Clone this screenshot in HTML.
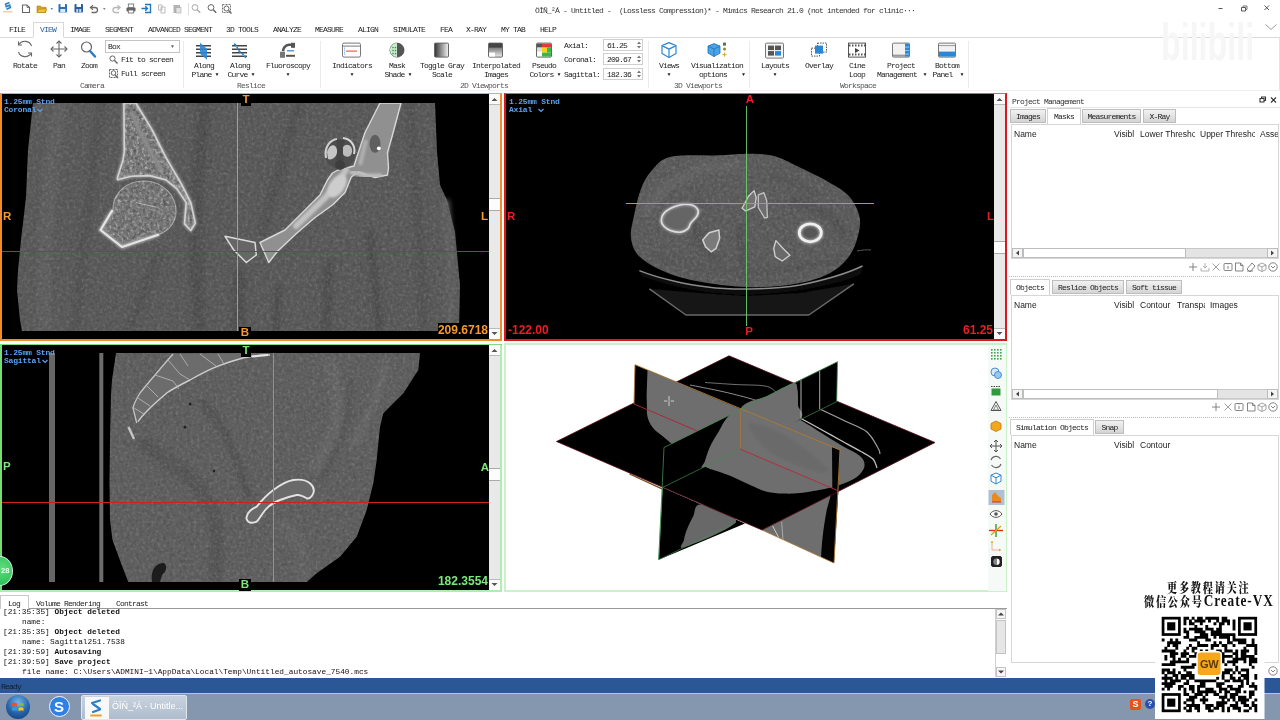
<!DOCTYPE html><html><head><meta charset="utf-8"><title>Mimics Research 21.0</title><style>
*{box-sizing:border-box;margin:0;padding:0}
html,body{width:1280px;height:720px;overflow:hidden;background:#fff}
body{font-family:"Liberation Mono","Noto Sans CJK SC",monospace;font-size:8px;color:#222;letter-spacing:-0.8px;line-height:10px}
#root{will-change:transform;position:relative;width:1280px;height:720px;overflow:hidden;background:#fff}
.a{position:absolute;white-space:nowrap}
.c{position:absolute;white-space:nowrap;text-align:center}
.sans{font-family:"Liberation Sans","Noto Sans CJK SC",sans-serif;letter-spacing:0}
.log{font-family:"Liberation Mono",monospace;font-size:7.8px;letter-spacing:0;color:#111}
.sep{position:absolute;width:1px;background:#ebebeb}
.tabg{position:absolute;background:linear-gradient(#f2f2f2,#d4d4d4);border:1px solid #bdbdbd;text-align:center}
.tabw{position:absolute;background:#fff;border:1px solid #d0d0d0;border-bottom:none;text-align:center}
svg{position:absolute;overflow:visible}
</style></head><body><div id="root">
<div class="a" style="left:535px;top:5.5px;color:#333">ÖÎÑ_²Á - Untitled -&nbsp; (Lossless Compression)* - Mimics Research 21.0 (not intended for clinic···</div>
<svg style="left:1210px;top:1px" width="66" height="16" viewBox="0 0 66 16"><g stroke="#555" stroke-width="1" fill="none"><path d="M8.500 7.500h4"/><path d="M31.500 6.500h4v3.500h-4z"/><path d="M33 6.500v-1.500h4v3.500h-1.500" stroke="#777"/><path d="M54.500 4.500l4.500 4.500m0-4.500l-4.500 4.500"/></g></svg>
<svg style="left:1264px;top:22px" width="14" height="10" viewBox="0 0 14 10"><path d="M1.5 2.5l5.5 5 5.5-5" stroke="#999" fill="none"/></svg>
<svg style="left:0;top:-0.800px" width="240" height="20" viewBox="0 0 240 20"><g fill="none"><path d="M5 5.500l4.500-2M5.500 8l5-2.200M6.500 10.300l4.500-2" stroke="#2b7fc8" stroke-width="1.700"/><path d="M5 5.500l2 2.500M9 6.500l2 2" stroke="#2b7fc8" stroke-width="1.200"/><path d="M3 12.800h9.500" stroke="#f3c48a" stroke-width="1.200"/></g><path d="M22.500 6h4.500l2.500 2.500v5h-7z" fill="#fff" stroke="#666" stroke-width="1.100"/><path d="M27 6v2.500h2.500" fill="none" stroke="#666" stroke-width=".8"/><path d="M37 7h3.500l1 1.300h4.500v5.200h-9z" fill="#d9a521" stroke="#a87a10" stroke-width=".6"/><path d="M37 13.500l1.800-3.500h8l-1.800 3.500z" fill="#f0c040" stroke="#a87a10" stroke-width=".5"/><path d="M50.500 9.200l1.300 1.600 1.300-1.600z" fill="#1c5fa8"/><rect x="58.500" y="5" width="8.500" height="8.500" rx=".8" fill="#2a72b8"/><rect x="60.500" y="5" width="4.500" height="3" fill="#fff"/><rect x="60.300" y="10" width="5" height="3.500" fill="#dce8f4"/><rect x="74.500" y="5" width="8.500" height="8.500" rx=".8" fill="#2a5e9a"/><rect x="76.500" y="5" width="4.500" height="3" fill="#fff"/><rect x="76.300" y="10" width="5" height="3.500" fill="#c8d8ea"/><path d="M78.700 10v3.500" stroke="#2a5e9a" stroke-width="1"/><path d="M91 8.500h4a2.500 2.500 0 0 1 0 5h-3.500" fill="none" stroke="#6a6a6a" stroke-width="1.300"/><path d="M93 6.200l-2.600 2.300 2.600 2.300" fill="none" stroke="#6a6a6a" stroke-width="1.200"/><path d="M103 9.200l1.300 1.600 1.300-1.600z" fill="#555"/><path d="M119.500 8.500h-4a2.500 2.500 0 0 0 0 5h3.500" fill="none" stroke="#b8b8b8" stroke-width="1.300"/><path d="M117.500 6.200l2.600 2.300-2.600 2.300" fill="none" stroke="#b8b8b8" stroke-width="1.200"/><rect x="126.500" y="8.500" width="9" height="4" rx=".8" fill="#666"/><rect x="128.300" y="5" width="5.400" height="3.500" fill="#fff" stroke="#666" stroke-width=".8"/><rect x="128.300" y="11" width="5.400" height="3" fill="#fff" stroke="#666" stroke-width=".8"/><path d="M145 5.500h5.500v8h-5.500" fill="none" stroke="#1c78c0" stroke-width="1.400"/><path d="M141.500 9.500h6m-2.200-2.200l2.200 2.200-2.200 2.200" fill="none" stroke="#1c78c0" stroke-width="1.300"/><path d="M158.500 6h3.500v5h-3.500z M161 8h4v6h-4z" fill="#fff" stroke="#b4b4b4" stroke-width=".9"/><rect x="173.500" y="6" width="6.500" height="8" fill="#b4b4b4"/><rect x="176" y="8.500" width="5" height="5.500" fill="#e4e4e4" stroke="#a4a4a4" stroke-width=".6"/><path d="M188.500 4v12" stroke="#ddd"/><circle cx="195" cy="8.500" r="2.900" fill="none" stroke="#aaa" stroke-width="1"/><path d="M197.2 10.700l3 3" stroke="#aaa" stroke-width="1.500"/><circle cx="211" cy="8.500" r="2.900" fill="none" stroke="#666" stroke-width="1"/><path d="M213.2 10.700l3 3" stroke="#666" stroke-width="1.500"/><rect x="222.500" y="5.500" width="8" height="8" fill="none" stroke="#777" stroke-dasharray="2 1"/><circle cx="226.500" cy="9.500" r="2.500" fill="#fff" stroke="#666"/><path d="M228.500 11.500l3 3" stroke="#666" stroke-width="1.500"/></svg>
<div class="a" style="left:0px;top:37px;width:1280px;height:1px;background:#dcdcdc;"></div>
<div class="a" style="left:33px;top:22px;width:31px;height:16px;background:#fff;border:1px solid #d8d8d8;border-bottom:1px solid #fff"></div>
<div class="a" style="left:9px;top:24.5px;color:#222">FILE</div>
<div class="a" style="left:40px;top:24.5px;color:#2a5d9c">VIEW</div>
<div class="a" style="left:70px;top:24.5px;color:#222">IMAGE</div>
<div class="a" style="left:105px;top:24.5px;color:#222">SEGMENT</div>
<div class="a" style="left:148px;top:24.5px;color:#222">ADVANCED SEGMENT</div>
<div class="a" style="left:226px;top:24.5px;color:#222">3D TOOLS</div>
<div class="a" style="left:273px;top:24.5px;color:#222">ANALYZE</div>
<div class="a" style="left:315px;top:24.5px;color:#222">MEASURE</div>
<div class="a" style="left:358px;top:24.5px;color:#222">ALIGN</div>
<div class="a" style="left:393px;top:24.5px;color:#222">SIMULATE</div>
<div class="a" style="left:440px;top:24.5px;color:#222">FEA</div>
<div class="a" style="left:466px;top:24.5px;color:#222">X-RAY</div>
<div class="a" style="left:501px;top:24.5px;color:#222">MY TAB</div>
<div class="a" style="left:540px;top:24.5px;color:#222">HELP</div>
<div class="a" style="left:0px;top:90px;width:1280px;height:1px;background:#f0f0f0;"></div>
<div class="sep" style="left:183px;top:41px;height:47px"></div>
<div class="sep" style="left:320px;top:41px;height:47px"></div>
<div class="sep" style="left:648px;top:41px;height:47px"></div>
<div class="sep" style="left:749px;top:41px;height:47px"></div>
<div class="sep" style="left:968px;top:41px;height:47px"></div>
<div class="c" style="left:52.0px;top:80.5px;width:80px;color:#555">Camera</div>
<div class="c" style="left:211.0px;top:80.5px;width:80px;color:#555">Reslice</div>
<div class="c" style="left:444.0px;top:80.5px;width:80px;color:#555">2D Viewports</div>
<div class="c" style="left:658.0px;top:80.5px;width:80px;color:#555">3D Viewports</div>
<div class="c" style="left:818.0px;top:80.5px;width:80px;color:#555">Workspace</div>
<div class="c" style="left:-15.0px;top:60.5px;width:80px;">Rotate</div>
<div class="c" style="left:19.0px;top:60.5px;width:80px;">Pan</div>
<div class="c" style="left:49.0px;top:60.5px;width:80px;">Zoom</div>
<div class="c" style="left:164.0px;top:60.5px;width:80px;">Along</div>
<div class="c" style="left:165.0px;top:69.5px;width:80px;">Plane <span style="font-size:5px;letter-spacing:0;vertical-align:1px">&#9660;</span></div>
<div class="c" style="left:200.0px;top:60.5px;width:80px;">Along</div>
<div class="c" style="left:201.0px;top:69.5px;width:80px;">Curve <span style="font-size:5px;letter-spacing:0;vertical-align:1px">&#9660;</span></div>
<div class="c" style="left:248.0px;top:60.5px;width:80px;">Fluoroscopy</div>
<div class="c" style="left:248.0px;top:69.5px;width:80px;"><span style="font-size:5px;letter-spacing:0;vertical-align:1px">&#9660;</span></div>
<div class="c" style="left:312.0px;top:60.5px;width:80px;">Indicators</div>
<div class="c" style="left:312.0px;top:69.5px;width:80px;"><span style="font-size:5px;letter-spacing:0;vertical-align:1px">&#9660;</span></div>
<div class="c" style="left:357.0px;top:60.5px;width:80px;">Mask</div>
<div class="c" style="left:358.0px;top:69.5px;width:80px;">Shade <span style="font-size:5px;letter-spacing:0;vertical-align:1px">&#9660;</span></div>
<div class="c" style="left:402.0px;top:60.5px;width:80px;">Toggle Gray</div>
<div class="c" style="left:402.0px;top:69.5px;width:80px;">Scale</div>
<div class="c" style="left:456.0px;top:60.5px;width:80px;">Interpolated</div>
<div class="c" style="left:456.0px;top:69.5px;width:80px;">Images</div>
<div class="c" style="left:504.0px;top:60.5px;width:80px;">Pseudo</div>
<div class="c" style="left:505.0px;top:69.5px;width:80px;">Colors <span style="font-size:5px;letter-spacing:0;vertical-align:1px">&#9660;</span></div>
<div class="c" style="left:629.0px;top:60.5px;width:80px;">Views</div>
<div class="c" style="left:629.0px;top:69.5px;width:80px;"><span style="font-size:5px;letter-spacing:0;vertical-align:1px">&#9660;</span></div>
<div class="c" style="left:677.0px;top:60.5px;width:80px;">Visualization</div>
<div class="c" style="left:673.0px;top:69.5px;width:80px;">options</div>
<div class="a" style="left:742px;top:69.5px;"><span style="font-size:5px;letter-spacing:0;vertical-align:1px">&#9660;</span></div>
<div class="c" style="left:735.0px;top:60.5px;width:80px;">Layouts</div>
<div class="c" style="left:735.0px;top:69.5px;width:80px;"><span style="font-size:5px;letter-spacing:0;vertical-align:1px">&#9660;</span></div>
<div class="c" style="left:779.0px;top:60.5px;width:80px;">Overlay</div>
<div class="c" style="left:817.0px;top:60.5px;width:80px;">Cine</div>
<div class="c" style="left:817.0px;top:69.5px;width:80px;">Loop</div>
<div class="c" style="left:861.0px;top:60.5px;width:80px;">Project</div>
<div class="c" style="left:857.0px;top:69.5px;width:80px;">Management</div>
<div class="a" style="left:923.5px;top:69.5px;"><span style="font-size:5px;letter-spacing:0;vertical-align:1px">&#9660;</span></div>
<div class="c" style="left:907.0px;top:60.5px;width:80px;">Bottom</div>
<div class="c" style="left:908.0px;top:69.5px;width:80px;">Panel&nbsp; <span style="font-size:5px;letter-spacing:0;vertical-align:1px">&#9660;</span></div>
<div class="a" style="left:105px;top:40px;width:75px;height:13px;border:1px solid #c4c4c4;background:#fff"></div>
<div class="a" style="left:108px;top:41.5px;">Box</div>
<div class="a" style="left:171px;top:41.5px;color:#666"><span style="font-size:5px;letter-spacing:0;vertical-align:1px">&#9660;</span></div>
<div class="a" style="left:121px;top:54.5px;">Fit to screen</div>
<div class="a" style="left:121px;top:68.5px;">Full screen</div>
<svg style="left:108px;top:54px" width="12" height="26" viewBox="0 0 12 26"><circle cx="4.500" cy="4.500" r="2.600" fill="none" stroke="#666"/><path d="M6.500 6.500l3 3" stroke="#666" stroke-width="1.400"/><rect x="1.500" y="15.500" width="8" height="8" fill="none" stroke="#666" stroke-dasharray="2 1"/><circle cx="5.500" cy="19" r="2.300" fill="#fff" stroke="#666"/><path d="M7 21l3 3" stroke="#666" stroke-width="1.400"/></svg>
<div class="a" style="left:564px;top:40.5px;">Axial:</div>
<div class="a" style="left:603px;top:39px;width:40px;height:12px;border:1px solid #cfcfcf;background:#fff"></div>
<div class="a" style="left:607px;top:40.5px;">61.25</div>
<svg style="left:636px;top:40px" width="6" height="10" viewBox="0 0 6 10"><path d="M1 4l2-2.500 2 2.500z M1 6l2 2.500 2-2.500z" fill="#777"/></svg>
<div class="a" style="left:564px;top:54.5px;">Coronal:</div>
<div class="a" style="left:603px;top:53px;width:40px;height:12px;border:1px solid #cfcfcf;background:#fff"></div>
<div class="a" style="left:607px;top:54.5px;">209.67</div>
<svg style="left:636px;top:54px" width="6" height="10" viewBox="0 0 6 10"><path d="M1 4l2-2.500 2 2.500z M1 6l2 2.500 2-2.500z" fill="#777"/></svg>
<div class="a" style="left:564px;top:69.5px;">Sagittal:</div>
<div class="a" style="left:603px;top:68px;width:40px;height:12px;border:1px solid #cfcfcf;background:#fff"></div>
<div class="a" style="left:607px;top:69.5px;">182.36</div>
<svg style="left:636px;top:69px" width="6" height="10" viewBox="0 0 6 10"><path d="M1 4l2-2.500 2 2.500z M1 6l2 2.500 2-2.500z" fill="#777"/></svg>
<svg style="left:0;top:38px" width="980" height="26" viewBox="0 38 980 26"><g fill="none" stroke="#666" stroke-width="1.1" transform="translate(50,0) scale(-1,1)"><path d="M18.500 46a7 7 0 0 1 12.500-1.500"/><path d="M31.500 52a7 7 0 0 1-12.500 1.500"/><path d="M31.500 41.500v3.500h-3.500"/><path d="M18.500 56.500v-3.500h3.500"/></g><g fill="none" stroke="#666" stroke-width="1.1"><path d="M59 41v16M51 49h16"/><path d="M56.500 43.500l2.500-2.500 2.500 2.500M56.500 54.500l2.500 2.500 2.500-2.500M53.500 46.500l-2.500 2.500 2.500 2.500M64.500 46.500l2.500 2.500-2.500 2.500"/></g><circle cx="86.500" cy="47" r="5" fill="#fff" stroke="#666" stroke-width="1.2"/><path d="M90 51l5 5.500" stroke="#2a7ac8" stroke-width="2.400" stroke-linecap="round"/><g transform="translate(0,1.8)"><g stroke="#444" stroke-width="1.400"><path d="M196 44h15M196 47.500h15M196 51h15M196 54.500h15"/></g><path d="M200 41l7 6v11l-7-6z" fill="#2a86d6" opacity=".9"/><g stroke="#444" stroke-width="1.400"><path d="M232 44h15M232 47.500h15M232 51h15M232 54.500h15"/></g><path d="M234 42c4 2 3 6 6 8s4 4 6 6" fill="none" stroke="#2a86d6" stroke-width="1.600" stroke-dasharray="3 1"/><path d="M294 43h-5a6.500 6.500 0 0 0-6 6.500" fill="none" stroke="#555" stroke-width="2.600"/><rect x="280" y="50" width="5" height="6" fill="#777"/><rect x="291" y="41" width="4" height="5" fill="#555"/><path d="M286 54h9" stroke="#555" stroke-width="2"/><path d="M287 49h7" stroke="#2a86d6" stroke-width="1.200"/></g><g transform="translate(0,0.6)"><rect x="342.500" y="42.500" width="18" height="14" rx="1.500" fill="#fff" stroke="#777"/><path d="M343 45.500h17" stroke="#777"/><path d="M346 50.500h11" stroke="#e0402a"/><path d="M344.500 47v8" stroke="#58a6e0" stroke-dasharray="1 1"/><circle cx="397" cy="49.500" r="7" fill="#555" stroke="#444" stroke-width=".8"/><path d="M397 42.500a7 7 0 0 0 0 14z" fill="#c9ecd0"/><g fill="#2e9a48"><circle cx="393" cy="47" r=".8"/><circle cx="395.500" cy="47" r=".8"/><circle cx="393" cy="50" r=".8"/><circle cx="395.500" cy="50" r=".8"/><circle cx="393" cy="53" r=".8"/><circle cx="395.500" cy="53" r=".8"/></g><defs><linearGradient id="gg" x1="0" x2="1"><stop offset="0" stop-color="#333"/><stop offset="1" stop-color="#f4f4f4"/></linearGradient><linearGradient id="gv" x1="0" x2="0" y1="0" y2="1"><stop offset="0" stop-color="#444"/><stop offset="1" stop-color="#eee"/></linearGradient></defs><rect x="434.500" y="42.500" width="14" height="14" rx="1" fill="url(#gg)" stroke="#666"/><rect x="488.500" y="42.500" width="14" height="14" rx="1" fill="url(#gv)" stroke="#666"/><rect x="489" y="43" width="13" height="4" fill="#444"/><rect x="489" y="52" width="6" height="4" fill="#fff"/><rect x="536.500" y="42.500" width="15" height="14" rx="1" fill="#fff" stroke="#666"/><rect x="537" y="43" width="5" height="4" fill="#555"/><rect x="542" y="43" width="5" height="4" fill="#e03a3a"/><rect x="547" y="43" width="4" height="4" fill="#e03a3a"/><rect x="542" y="47" width="5" height="5" fill="#f2d21c"/><rect x="547" y="47" width="4" height="5" fill="#3cb648"/><rect x="542" y="52" width="9" height="4" fill="#3cb648"/><rect x="537" y="47" width="5" height="4" fill="#ddd"/><g fill="#fff" stroke="#2a86d6" stroke-width="1.200" stroke-linejoin="round"><path d="M669 42l7 3v8l-7 4-7-4v-8z"/><path d="M662 45l7 3.500 7-3.500M669 48.500v8.500"/></g><g stroke="#1d6fb8" stroke-width=".8" stroke-linejoin="round"><path d="M714 43l6 2.500v7l-6 3.500-6-3.500v-7z" fill="#4aa3e6"/><path d="M708 45.500l6 3 6-3" fill="none"/><path d="M714 48.500v7.500" fill="none"/></g><rect x="723" y="42" width="3" height="3" fill="#666"/><circle cx="724.500" cy="48.500" r="1.500" fill="#8a8a2a"/><path d="M724.500 52v4M722.500 54h4" stroke="#d9a91a"/><rect x="765.500" y="42.500" width="18" height="15" rx="1" fill="#f4f4f4" stroke="#777"/><rect x="768" y="45" width="6" height="4.500" fill="#555"/><rect x="775" y="45" width="6" height="4.500" fill="#555"/><rect x="768" y="50.500" width="6" height="4.500" fill="#555"/><rect x="775" y="50.500" width="6" height="4.500" fill="#2a86d6"/><rect x="811.500" y="47.500" width="8" height="8" fill="none" stroke="#555" stroke-dasharray="1.500 1"/><rect x="817.500" y="42.500" width="9" height="9" fill="none" stroke="#555" stroke-dasharray="1.500 1"/><rect x="815" y="45" width="8" height="8" fill="#2a86d6"/><rect x="848.500" y="42.500" width="17" height="14" fill="#fff" stroke="#555"/><path d="M849 45h16M849 54h16" stroke="#555" stroke-dasharray="1.500 1.500" stroke-width="2"/><path d="M855 47.500l4.500 2.500-4.500 2.500z" fill="#444"/><rect x="892.500" y="42.500" width="17" height="14" rx="1" fill="#f2f2f2" stroke="#777"/><rect x="905" y="43" width="4" height="13" fill="#2a86d6"/><path d="M905 46.500h4M905 50h4M905 53.500h4" stroke="#cfe6f8" stroke-width=".7"/><rect x="893" y="54" width="12" height="2" fill="#999"/><rect x="938.500" y="42.500" width="17" height="14" rx="1" fill="#f2f2f2" stroke="#777"/><rect x="939" y="51" width="16" height="5" fill="#2a86d6"/><path d="M939 45h16" stroke="#999"/></g></svg>
<div class="a sans" style="left:1161px;top:14px;font-size:52px;line-height:56px;font-weight:bold;color:#f6f6f6;letter-spacing:0;transform:scaleX(.62);transform-origin:0 0">bilibili</div>
<div class="a" style="left:1279px;top:38px;width:1px;height:52px;background:#e4e4e4;"></div>
<div class="a" style="left:0;top:93px;width:502px;height:248px;border:2px solid #f28c28;border-top:1px solid #f3a560;background:#000"></div>
<div class="a" style="left:504px;top:93px;width:503px;height:248px;border:2px solid #e0161c;border-top:1px solid #e8605c;background:#000"></div>
<div class="a" style="left:0;top:344px;width:502px;height:248px;border:2px solid #74de74;border-top:1px solid #7edc7e;background:#000"></div>
<div class="a" style="left:0;top:590px;width:502px;height:2px;background:#aeeeae"></div><div class="a" style="left:500px;top:345px;width:2px;height:247px;background:#aeeeae"></div>
<div class="a" style="left:504px;top:343px;width:503px;height:249px;border:2px solid #c9f2c9;background:#fff"></div>
<div class="a" style="left:489px;top:94px;width:11px;height:245px;background:#e9e9e9"></div>
<div class="a" style="left:489px;top:94px;width:11px;height:11px;background:#fafafa;border-bottom:1px solid #bbb"></div>
<div class="a" style="left:489px;top:328px;width:11px;height:11px;background:#fafafa;border-top:1px solid #bbb"></div>
<div class="a" style="left:489px;top:198px;width:11px;height:13px;background:#fcfcfc;border-top:1px solid #aaa;border-bottom:1px solid #aaa"></div>
<svg style="left:489px;top:94px" width="11" height="245" viewBox="0 0 11 245"><path d="M2.500 7l3-3 3 3z M2.500 238l3 3 3-3z" fill="#555"/></svg>
<div class="a" style="left:994px;top:94px;width:11px;height:245px;background:#e9e9e9"></div>
<div class="a" style="left:994px;top:94px;width:11px;height:11px;background:#fafafa;border-bottom:1px solid #bbb"></div>
<div class="a" style="left:994px;top:328px;width:11px;height:11px;background:#fafafa;border-top:1px solid #bbb"></div>
<div class="a" style="left:994px;top:241px;width:11px;height:13px;background:#fcfcfc;border-top:1px solid #aaa;border-bottom:1px solid #aaa"></div>
<svg style="left:994px;top:94px" width="11" height="245" viewBox="0 0 11 245"><path d="M2.500 7l3-3 3 3z M2.500 238l3 3 3-3z" fill="#555"/></svg>
<div class="a" style="left:489px;top:345px;width:11px;height:245px;background:#e9e9e9"></div>
<div class="a" style="left:489px;top:345px;width:11px;height:11px;background:#fafafa;border-bottom:1px solid #bbb"></div>
<div class="a" style="left:489px;top:579px;width:11px;height:11px;background:#fafafa;border-top:1px solid #bbb"></div>
<div class="a" style="left:489px;top:468px;width:11px;height:13px;background:#fcfcfc;border-top:1px solid #aaa;border-bottom:1px solid #aaa"></div>
<svg style="left:489px;top:345px" width="11" height="245" viewBox="0 0 11 245"><path d="M2.500 7l3-3 3 3z M2.500 238l3 3 3-3z" fill="#555"/></svg>
<svg style="left:0;top:0" width="1280" height="720" viewBox="0 0 1280 720"><defs>
<filter id="b1" x="-5%" y="-5%" width="110%" height="110%"><feGaussianBlur stdDeviation="0.7"/></filter>
<filter id="b2" x="-20%" y="-20%" width="140%" height="140%"><feGaussianBlur stdDeviation="2.5"/></filter>
<filter id="b3" x="-20%" y="-20%" width="140%" height="140%"><feGaussianBlur stdDeviation="1.2"/></filter>
<filter id="nz" x="0" y="0" width="100%" height="100%"><feTurbulence type="fractalNoise" baseFrequency="0.33" numOctaves="3" seed="3" result="t"/><feColorMatrix type="matrix" values="0 0 0 0 1  0 0 0 0 1  0 0 0 0 1  2.2 0 0 0 -1.0"/></filter>
<filter id="nzd" x="0" y="0" width="100%" height="100%"><feTurbulence type="fractalNoise" baseFrequency="0.3" numOctaves="3" seed="11" result="t"/><feColorMatrix type="matrix" values="0 0 0 0 0  0 0 0 0 0  0 0 0 0 0  0 2.2 0 0 -1.0"/></filter>
<clipPath id="cCor"><rect x="2" y="103" width="487" height="228"/></clipPath>
<clipPath id="cAx"><rect x="506" y="94" width="488" height="245"/></clipPath>
<clipPath id="cSag"><rect x="2" y="353" width="487" height="229"/></clipPath>
</defs><g clip-path="url(#cCor)"><g filter="url(#b1)"><polygon points="33,103 28,150 26,197 21,240 18,270 17,290 20,320 22,331 459,331 460,285 455,232 447,200 440,185 437,152 435,103" fill="#5a5a5a"/><g filter="url(#b2)" fill="none"><path d="M60 103C50 180 40 260 45 331" stroke="#616161" stroke-width="14"/><path d="M100 103C95 160 85 210 75 331" stroke="#535353" stroke-width="8"/><path d="M205 103C200 160 190 210 200 331" stroke="#515151" stroke-width="14"/><path d="M160 250C150 280 140 300 130 331" stroke="#525252" stroke-width="8"/><path d="M300 103C290 140 270 200 262 235" stroke="#525252" stroke-width="10"/><path d="M330 260C325 290 330 310 325 331" stroke="#505050" stroke-width="9"/><path d="M370 230C372 270 378 300 380 331" stroke="#505050" stroke-width="9"/><path d="M410 103C415 170 420 240 425 331" stroke="#535353" stroke-width="8"/><path d="M445 200C450 250 452 290 450 331" stroke="#626262" stroke-width="8"/><path d="M240 270C238 290 240 310 238 331" stroke="#4f4f4f" stroke-width="12"/><path d="M278 285C276 300 278 315 276 331" stroke="#4e4e4e" stroke-width="6"/></g><clipPath id="bCor"><polygon points="33,103 28,150 26,197 21,240 18,270 17,290 20,320 22,331 459,331 460,285 455,232 447,200 440,185 437,152 435,103"/></clipPath><g clip-path="url(#bCor)"><rect x="10" y="103" width="460" height="228" filter="url(#nz)" opacity=".14"/><rect x="10" y="103" width="460" height="228" filter="url(#nzd)" opacity=".14"/></g><polygon points="123.9,103 135.8,103 151.8,129.3 165.6,156.8 181.6,184.3 190.8,202.6 195.3,223.2 190.8,230.5 184.5,224 186.2,202.6 177,188.9 165.6,179.7 149.5,175.6 131.2,176.3 117.5,179.7 117.5,177.5 123,160 124.3,152.2" fill="#787878" stroke="#9a9a9a" stroke-width="3.4" stroke-linejoin="round" filter="url(#b3)"/><clipPath id="bIl"><polygon points="123.9,103 135.8,103 151.8,129.3 165.6,156.8 181.6,184.3 190.8,202.6 195.3,223.2 190.8,230.5 184.5,224 186.2,202.6 177,188.9 165.6,179.7 149.5,175.6 131.2,176.3 117.5,179.7 117.5,177.5 123,160 124.3,152.2"/></clipPath><g clip-path="url(#bIl)"><rect x="110" y="100" width="90" height="135" filter="url(#nz)" opacity=".5"/><rect x="110" y="100" width="90" height="135" filter="url(#nzd)" opacity=".35"/></g><polygon points="123.9,103 135.8,103 151.8,129.3 165.6,156.8 181.6,184.3 190.8,202.6 195.3,223.2 190.8,230.5 184.5,224 186.2,202.6 177,188.9 165.6,179.7 149.5,175.6 131.2,176.3 117.5,179.7 117.5,177.5 123,160 124.3,152.2" fill="none" stroke="#d2d2d2" stroke-width="1.6" stroke-linejoin="round"/><path d="M131 112l10 22 12 22 10 16" fill="none" stroke="#8c8c8c" stroke-width="4" filter="url(#b3)"/><path d="M112.900 209.500C113 192 128 180.500 145 181C163 181.500 176.500 196 176 212C175.500 222 170 230 158.700 234.700L122 247.300L100.300 230.100Z" fill="#747474" stroke="#a8a8a8" stroke-width="1.1" stroke-linejoin="round"/><clipPath id="bFh"><path d="M112.900 209.500C113 192 128 180.500 145 181C163 181.500 176.500 196 176 212C175.500 222 170 230 158.700 234.700L122 247.300L100.300 230.100Z"/></clipPath><g clip-path="url(#bFh)"><rect x="98" y="178" width="82" height="72" filter="url(#nz)" opacity=".45"/><rect x="98" y="178" width="82" height="72" filter="url(#nzd)" opacity=".3"/></g><path d="M112.500 210L100.500 230L122 247L159 234.500" fill="none" stroke="#a8a8a8" stroke-width="4" stroke-linejoin="round" filter="url(#b3)"/><path d="M112.500 210L100.500 230L122 247L159 234.500" fill="none" stroke="#e4e4e4" stroke-width="2.2" stroke-linejoin="round"/><path d="M135.800 202.600l20.600 4.600" stroke="#b4b4b4" stroke-width="1"/><polygon points="225,236.3 255,242.5 256.3,255 246.3,262.5 233.8,250" fill="#666" stroke="#dadada" stroke-width="1.5" stroke-linejoin="round"/><polygon points="260,242.5 268.8,262.5 277.5,251.3 297.5,232.5 315,217.5 332.5,205 345,192.5 351.3,177 358,172 375,177.5 387.5,175 388.5,168 387.5,152.5 392.5,135 401,103 380,103 365,132.5 357.5,155 354,166 346,168 338,170 332.5,173 327.5,180 320,195 307.5,207.5 285,230" fill="#909090" stroke="#d8d8d8" stroke-width="1.4" stroke-linejoin="round"/><path d="M296 226L325 198L338 182L346 170" fill="none" stroke="#c2c2c2" stroke-width="6" filter="url(#b3)" stroke-linecap="round"/><ellipse cx="337" cy="186" rx="13" ry="7.500" transform="rotate(-55 337 186)" fill="#cdcdcd" filter="url(#b3)"/><path d="M352 172L366 176L380 176" fill="none" stroke="#bcbcbc" stroke-width="5" filter="url(#b3)" stroke-linecap="round"/><path d="M366 140L360 165" fill="none" stroke="#b0b0b0" stroke-width="4" filter="url(#b3)"/><ellipse cx="375" cy="143.800" rx="5.500" ry="9" fill="#5e5e5e"/><circle cx="378.800" cy="148.300" r="1.900" fill="#fff"/><circle cx="340" cy="154" r="15" fill="#4e4e4e"/><path d="M326 158C324 147 330 140 337 139" fill="none" stroke="#cfcfcf" stroke-width="2.2"/><path d="M343 138C351 139 356 146 354 154" fill="none" stroke="#d8d8d8" stroke-width="2"/><path d="M327 152c3-9 9-8 10-2s-5 11-9 9z" fill="#c6c6c6"/><path d="M343 147c4-5 10-1 9 5s-7 6-9 2z" fill="#bdbdbd"/><path d="M336 140c2 6 2 14 0 20h8c-2-6-2-14 1-20z" fill="#444"/><circle cx="340" cy="165" r="5" fill="#3e3e3e"/></g></g><g clip-path="url(#cAx)"><g filter="url(#b1)"><polygon points="649.4,288.8 686,315 808.8,315 853.8,283.8 800,293 746,296 700,293" fill="#131313"/><path d="M649.400 288.800L686 315H808.800L853.800 283.800" fill="none" stroke="#6a6a6a" stroke-width="1.5" stroke-linejoin="round"/><path d="M639.400 270.600C660 279 690 285 707.500 287C730 290 770 290 800 285C825 280 850 272 862.500 266L861 274C840 284 800 293 746 295C700 294 660 284 641 275Z" fill="#0c0c0c"/><path d="M639.400 270.600C660 279 690 285 707.500 287C730 290 770 290 800 285C825 280 850 272 862.500 266" fill="none" stroke="#8c8c8c" stroke-width="1.5"/><path d="M857 251C862 250 867 249.500 871 250" fill="none" stroke="#555" stroke-width="1"/><path d="M651.7 170.6C656.8 165.0 659.5 159.2 671.0 156.7C682.5 154.1 707.8 155.8 721.0 155.3C734.2 154.8 741.0 153.6 750.0 153.8C759.0 154.0 766.7 154.0 775.0 156.3C783.3 158.6 791.7 163.6 800.0 167.5C808.3 171.4 817.5 175.8 825.0 180.0C832.5 184.2 840.0 188.3 845.0 192.5C850.0 196.7 852.5 200.4 855.0 205.0C857.5 209.6 859.6 214.6 860.0 220.0C860.4 225.4 859.2 231.7 857.5 237.5C855.8 243.3 853.8 249.6 850.0 255.0C846.2 260.4 841.2 265.8 835.0 270.0C828.8 274.2 821.7 277.3 812.5 280.0C803.3 282.7 791.1 284.8 780.0 286.0C768.9 287.2 758.1 287.5 746.0 287.0C733.9 286.5 719.2 284.8 707.5 283.0C695.8 281.2 685.4 279.0 676.0 276.0C666.6 273.0 657.7 268.9 651.0 265.0C644.3 261.1 639.4 257.3 636.0 252.5C632.6 247.7 631.2 241.8 630.8 236.0C630.4 230.2 632.0 225.5 633.6 217.8C635.2 210.1 637.6 197.9 640.6 190.0C643.6 182.1 646.6 176.2 651.7 170.6Z" fill="#5c5c5c"/><g filter="url(#b2)" fill="none"><path d="M645 215C660 180 700 165 740 165" stroke="#646464" stroke-width="10"/><path d="M700 200C690 215 690 240 720 262" stroke="#535353" stroke-width="8"/><path d="M790 200C810 205 840 215 845 240" stroke="#535353" stroke-width="8"/><path d="M740 225C742 250 744 265 745 282" stroke="#515151" stroke-width="7"/><path d="M650 252C690 275 790 280 845 255" stroke="#565656" stroke-width="6"/><path d="M770 175C790 180 800 185 815 195" stroke="#545454" stroke-width="5"/></g><clipPath id="bAx"><path d="M651.7 170.6C656.8 165.0 659.5 159.2 671.0 156.7C682.5 154.1 707.8 155.8 721.0 155.3C734.2 154.8 741.0 153.6 750.0 153.8C759.0 154.0 766.7 154.0 775.0 156.3C783.3 158.6 791.7 163.6 800.0 167.5C808.3 171.4 817.5 175.8 825.0 180.0C832.5 184.2 840.0 188.3 845.0 192.5C850.0 196.7 852.5 200.4 855.0 205.0C857.5 209.6 859.6 214.6 860.0 220.0C860.4 225.4 859.2 231.7 857.5 237.5C855.8 243.3 853.8 249.6 850.0 255.0C846.2 260.4 841.2 265.8 835.0 270.0C828.8 274.2 821.7 277.3 812.5 280.0C803.3 282.7 791.1 284.8 780.0 286.0C768.9 287.2 758.1 287.5 746.0 287.0C733.9 286.5 719.2 284.8 707.5 283.0C695.8 281.2 685.4 279.0 676.0 276.0C666.6 273.0 657.7 268.9 651.0 265.0C644.3 261.1 639.4 257.3 636.0 252.5C632.6 247.7 631.2 241.8 630.8 236.0C630.4 230.2 632.0 225.5 633.6 217.8C635.2 210.1 637.6 197.9 640.6 190.0C643.6 182.1 646.6 176.2 651.7 170.6Z"/></clipPath><g clip-path="url(#bAx)"><rect x="625" y="150" width="240" height="140" filter="url(#nz)" opacity=".14"/><rect x="625" y="150" width="240" height="140" filter="url(#nzd)" opacity=".14"/></g><path d="M661.3 220.2C661.5 217.7 662.7 214.2 665.5 211.7C668.3 209.2 673.9 206.6 678.1 205.4C682.3 204.2 687.5 204.0 690.8 204.7C694.1 205.4 696.8 207.7 697.8 209.6C698.8 211.5 698.3 213.7 697.1 215.9C695.9 218.1 692.3 220.9 690.8 223.0C689.3 225.1 689.6 227.1 688.0 228.6C686.4 230.1 683.7 231.8 680.9 232.1C678.1 232.4 673.9 231.6 671.1 230.7C668.3 229.8 665.7 228.2 664.1 226.5C662.5 224.8 661.1 222.7 661.3 220.2Z" fill="#656565" stroke="#9c9c9c" stroke-width="3.2" filter="url(#b3)"/><path d="M661.3 220.2C661.5 217.7 662.7 214.2 665.5 211.7C668.3 209.2 673.9 206.6 678.1 205.4C682.3 204.2 687.5 204.0 690.8 204.7C694.1 205.4 696.8 207.7 697.8 209.6C698.8 211.5 698.3 213.7 697.1 215.9C695.9 218.1 692.3 220.9 690.8 223.0C689.3 225.1 689.6 227.1 688.0 228.6C686.4 230.1 683.7 231.8 680.9 232.1C678.1 232.4 673.9 231.6 671.1 230.7C668.3 229.8 665.7 228.2 664.1 226.5C662.5 224.8 661.1 222.7 661.3 220.2Z" fill="none" stroke="#dcdcdc" stroke-width="1.6"/><polygon points="702.7,239.9 709.1,232.8 718.9,230 719.6,238.4 716.1,248.3 711.2,251.8 705.6,246.9" fill="#7a7a7a" stroke="#d0d0d0" stroke-width="1.5" stroke-linejoin="round"/><polygon points="775.9,240.6 783.6,249 789.9,255.3 782.2,261 775.2,256.7 773.8,248.3" fill="#6a6a6a" stroke="#cccccc" stroke-width="1.4" stroke-linejoin="round"/><ellipse cx="810.300" cy="232.800" rx="11" ry="9" fill="#565656" stroke="#a0a0a0" stroke-width="4.6" filter="url(#b3)"/><ellipse cx="810.300" cy="232.800" rx="11" ry="9" fill="none" stroke="#f0f0f0" stroke-width="2.8"/><polygon points="742.1,208.2 748.5,196.3 754.1,190.6 756.2,197.7 754.8,206.8 745.6,211" fill="#727272" stroke="#d0d0d0" stroke-width="1.3" stroke-linejoin="round"/><polygon points="758.3,194.8 763.9,192.7 766.7,200.5 767.4,217.3 764.6,218 758.3,207.5" fill="#6e6e6e" stroke="#c4c4c4" stroke-width="1.3" stroke-linejoin="round"/></g></g><g clip-path="url(#cSag)"><g filter="url(#b1)"><rect x="49" y="353" width="6" height="229" fill="#666666"/><rect x="99.300" y="353" width="4" height="229" fill="#6c6c6c"/><polygon points="116,353 112,380 111,395 110,440 109.5,482 110,520 112.5,540 121.7,565 128.3,582 306.7,582 316.7,573.3 340,556.7 356.7,536.7 366.7,510 373.3,483.3 376.7,460 380,426.7 383.3,413.3 403.3,393.3 418.3,370 420,353" fill="#5f5f5f"/><g filter="url(#b2)" fill="none"><path d="M140 440C170 470 200 470 215 520C220 550 215 570 215 582" stroke="#565656" stroke-width="14"/><path d="M200 400C230 430 240 470 250 500" stroke="#555555" stroke-width="8"/><path d="M330 360C340 400 345 430 310 470" stroke="#666666" stroke-width="12"/><path d="M385 360C380 390 370 420 350 450" stroke="#676767" stroke-width="8"/><path d="M350 380C352 420 340 450 320 480" stroke="#555555" stroke-width="5"/><path d="M280 520C300 540 310 560 300 582" stroke="#656565" stroke-width="10"/></g><clipPath id="bSag"><polygon points="116,353 112,380 111,395 110,440 109.5,482 110,520 112.5,540 121.7,565 128.3,582 306.7,582 316.7,573.3 340,556.7 356.7,536.7 366.7,510 373.3,483.3 376.7,460 380,426.7 383.3,413.3 403.3,393.3 418.3,370 420,353"/></clipPath><g clip-path="url(#bSag)"><rect x="105" y="353" width="320" height="229" filter="url(#nz)" opacity=".14"/><rect x="105" y="353" width="320" height="229" filter="url(#nzd)" opacity=".14"/></g><path d="M173 354C166 362 160 369 155 375C149 382 144 388 140 393C137 398 134 403 133 408L136.700 423L138 421.700C141 417 146 412 150 408C155 403 161 398 166.700 393C174 388 182 384 190 380C199 375 208 370 216.700 366.700C226 363 235 360 243 358C252 356 262 355 270 355L270 353Z" fill="#6c6c6c"/><path d="M173 354C166 362 160 369 155 375C149 382 144 388 140 393C137 398 134 403 133 408L136.700 423" fill="none" stroke="#c4c4c4" stroke-width="1.3"/><path d="M270 355C262 355 252 356 243 358C235 360 226 363 216.700 366.700C208 370 199 375 190 380C182 384 174 388 166.700 393C161 398 155 403 150 408C146 412 141 417 138 421.700" fill="none" stroke="#cdcdcd" stroke-width="1.4"/><path d="M168 360l12 14 10 6M180 354l8 12M155 375l18 6 6 8M146 385l12 12M138 398l12 8M134 408l10 6M200 354l16 12M218 354l6 10" fill="none" stroke="#b2b2b2" stroke-width="0.9"/><path d="M128.500 427l5.500 12" stroke="#c6c6c6" stroke-width="2.4"/><path d="M252 356.500l16-1.500" stroke="#e6e6e6" stroke-width="2.2"/><path d="M246.700 516.700C248 511 252 509 256.700 506.700C262 500 268 494 273.300 490C280 485 287 481 293.300 480C300 479 306 480 310 483.300C313 486 314.500 490 313.300 493.300C312 497 309 499 306.700 498.300C303 496 300 494.500 296.700 495C291 496 285 498 280 500C275 502 270 505 266.700 508.300C263 512 260 518 256.700 521.700C254 523 250 523 248.300 521.700C246.500 520 246.200 518 246.700 516.700Z" fill="#6a6a6a" stroke="#e2e2e2" stroke-width="1.9" stroke-linejoin="round"/><path d="M152 582C150 570 156 563 164 563C168 566 166 572 162 575L160 582Z" fill="#1c1c1c"/><circle cx="190" cy="404" r="1.500" fill="#222"/><circle cx="185" cy="427" r="1.500" fill="#222"/><circle cx="214" cy="471" r="1.200" fill="#222"/></g></g><g><polygon points="662.5,487.5 745,523.5 658.7,559.7" fill="#000"/><path d="M701.0 504.5C708.2 505.3 738.7 514.4 736.0 521.5C733.3 528.6 693.7 543.9 685.0 547.0C676.3 550.1 683.7 542.8 684.0 540.0C684.3 537.2 685.2 533.9 686.7 530.0C688.2 526.1 690.6 521.0 693.0 516.7C695.4 512.5 693.8 503.7 701.0 504.5Z" fill="#686868" filter="url(#b1)"/><polyline points="662.5,487.5 658.7,559.7 736,522.3" fill="none" stroke="#3f8f50" stroke-width="0.8" opacity=".8"/><polygon points="762,530 838.3,490.8 834,563" fill="#6e6e6e"/><clipPath id="cCL"><polygon points="762,530 838.3,490.8 834,563"/></clipPath><path clip-path="url(#cCL)" d="M832.500 489L840 489L836 565L821 559C821.500 545 823 530 826.700 510Z" fill="#030303"/><polyline points="772.5,525.8 779,538" fill="none" stroke="#d4d4d4" stroke-width="0.9"/><polyline points="781.7,521.7 783,540" fill="none" stroke="#b8b8b8" stroke-width="0.8"/><polyline points="762,530 834,563" fill="none" stroke="#b07a32" stroke-width="0.8"/><polyline points="629.5,474 662,488.8" fill="none" stroke="#7a4a1e" stroke-width="1.3"/><clipPath id="cDia"><polygon points="556.5,441.5 729,355.8 935,442.5 762,530"/></clipPath><polygon points="556.5,441.5 729,355.8 935,442.5 762,530" fill="#000"/><g clip-path="url(#cDia)" filter="url(#b1)"><path d="M647.0 402.0C646.8 404.9 646.5 412.3 647.5 416.7C648.5 421.1 650.7 425.0 653.3 428.3C655.9 431.6 658.8 433.1 663.3 436.7C667.8 440.3 673.2 445.1 680.0 450.0C686.8 454.9 697.9 462.5 704.0 466.0C710.1 469.5 711.9 469.2 716.7 471.0C721.5 472.8 727.5 474.7 733.0 477.0C738.5 479.3 744.4 482.6 750.0 485.0C755.6 487.4 761.2 490.3 766.7 491.7C772.2 493.1 777.5 493.3 783.0 493.5C788.5 493.7 792.7 493.8 800.0 493.0C807.3 492.2 819.2 490.2 826.7 488.5C834.2 486.8 839.8 485.1 845.0 483.0C850.2 480.9 854.8 478.8 858.0 476.0C861.2 473.2 864.2 469.3 864.5 466.0C864.8 462.7 864.1 459.6 860.0 456.0C855.9 452.4 849.5 450.2 840.0 444.5C830.5 438.8 811.3 426.4 803.0 421.5C794.7 416.6 799.7 414.4 790.0 415.0C780.3 415.6 760.0 425.5 745.0 425.0C730.0 424.5 713.3 415.8 700.0 412.0C686.7 408.2 673.5 404.2 665.0 402.0C656.5 399.8 652.0 399.0 649.0 399.0C646.0 399.0 647.2 399.1 647.0 402.0Z" fill="#6e6e6e"/><path d="M801.0 418.0C804.5 419.9 815.5 425.8 822.0 429.5C828.5 433.2 833.7 436.4 840.0 440.0C846.3 443.6 854.5 447.8 860.0 451.0C865.5 454.2 870.2 456.2 873.0 459.0C875.8 461.8 876.3 466.5 877.0 468.0" fill="none" stroke="#050505" stroke-width="3.2"/><path d="M801.0 418.5C804.5 420.4 815.5 426.4 822.0 430.0C828.5 433.6 833.7 436.5 840.0 440.0C846.3 443.5 854.5 447.8 860.0 451.0C865.5 454.2 870.2 456.2 873.0 459.0C875.8 461.8 876.3 466.5 877.0 468.0" fill="none" stroke="#c0c0c0" stroke-width="1.3"/><path d="M819.7 409.0C823.9 411.0 837.2 417.2 845.0 421.0C852.8 424.8 861.2 427.2 866.7 431.7C872.2 436.2 875.8 444.3 878.0 448.0C880.2 451.7 879.7 453.0 880.0 454.0" fill="none" stroke="#a0a0a0" stroke-width="1.2"/><path d="M690.0 385.0C695.0 386.0 710.0 388.8 720.0 391.0C730.0 393.2 743.0 396.5 750.0 398.5C757.0 400.5 760.0 402.2 762.0 403.0" fill="none" stroke="#8e8e8e" stroke-width="1"/><path d="M705.0 382.5C710.0 382.8 725.0 383.9 735.0 384.5C745.0 385.1 758.2 384.8 765.0 386.0C771.8 387.2 772.7 389.8 776.0 392.0C779.3 394.2 783.5 397.8 785.0 399.0" fill="none" stroke="#7e7e7e" stroke-width="0.9"/></g><polygon points="556.5,441.5 729,355.8 935,442.5 762,530" fill="none" stroke="#5a0a16" stroke-width="0.8" stroke-linejoin="round"/><polygon points="635,364.7 740.3,409 740.3,449.2 634,404" fill="#000"/><polygon points="647.5,370 740.3,409 740.3,449.2 647,409.6 646.6,395" fill="#6e6e6e" filter="url(#b1)"/><polygon points="740.3,409 837.5,361.7 836.7,401.7 740.3,449.2" fill="#000"/><path d="M740.3 409.0C744.9 400.1 759.2 399.8 768.0 395.5C776.8 391.2 788.1 384.1 793.0 383.2C797.9 382.3 796.7 386.4 797.5 390.0C798.3 393.6 797.9 399.9 798.0 405.0C798.1 410.1 807.6 413.4 798.0 420.8C788.4 428.2 749.9 451.2 740.3 449.2C730.7 447.2 735.7 417.9 740.3 409.0Z" fill="#6e6e6e" filter="url(#b1)"/><polyline points="801,380 801,419" fill="none" stroke="#b4b4b4" stroke-width="1.0"/><polyline points="819.7,371 819.7,409.5" fill="none" stroke="#a8a8a8" stroke-width="1.0"/><polygon points="664,447.5 740.3,409.8 740.3,449.2 662.5,487.5" fill="#000"/><path d="M727.5 417.2C731.0 413.8 738.2 405.2 740.3 410.5C742.4 415.8 746.3 439.8 740.3 449.2C734.2 458.6 709.9 465.2 704.0 467.2C698.1 469.2 704.0 464.4 705.0 461.0C706.0 457.6 707.7 451.7 710.0 446.7C712.3 441.7 716.1 435.9 719.0 431.0C721.9 426.1 724.0 420.6 727.5 417.2Z" fill="#6e6e6e" filter="url(#b1)"/><polygon points="740.3,409 840,450 838.3,490.8 740.3,449.2" fill="#707070"/><path d="M748.0 425.0C748.0 421.0 761.3 424.7 770.0 428.0C778.7 431.3 790.3 438.0 800.0 445.0C809.7 452.0 826.3 465.8 828.0 470.0C829.7 474.2 819.7 473.0 810.0 470.0C800.3 467.0 780.3 459.5 770.0 452.0C759.7 444.5 748.0 429.0 748.0 425.0Z" fill="#6a6a6a" filter="url(#b3)"/><polygon points="832,447 840,450 838.3,490.8 832.3,488.5" fill="#030303"/><polyline points="634,404 635,364.7 840,450 834,563" fill="none" stroke="#b07a32" stroke-width="0.9"/><polyline points="740.3,409 740.3,449.2" fill="none" stroke="#b07a32" stroke-width="0.8"/><polyline points="658.7,559.7 664,447.5 837.5,361.7 836.7,401.7" fill="none" stroke="#3f8f50" stroke-width="0.8"/><polyline points="662.5,487.5 740.3,449.2" fill="none" stroke="#3f8f50" stroke-width="0.7"/><polyline points="798.5,420.5 836.7,401.7" fill="none" stroke="#3f8f50" stroke-width="0.7"/><polyline points="634,404 697,430.8" fill="none" stroke="#b8283c" stroke-width="0.9"/><polyline points="740.3,449.2 838.3,490.8" fill="none" stroke="#b8283c" stroke-width="0.9"/><polyline points="664,401 674,401" fill="none" stroke="#e6e6e6" stroke-width="0.8"/><polyline points="669,396 669,406" fill="none" stroke="#e6e6e6" stroke-width="0.8"/><polyline points="667,401 671,401" fill="none" stroke="#333" stroke-width="0.6"/></g><path d="M237.500 103v228" stroke="#6ccf6c" stroke-width="1" opacity=".9"/><path d="M2 251.500h487" stroke="#d0221c" stroke-width="1"/><path d="M746.500 96v232" stroke="#6ccf6c" stroke-width="1" opacity=".9"/><path d="M626 203.500h248" stroke="#e8882a" stroke-width="1"/><path d="M273.500 353v229" stroke="#d8802a" stroke-width="1"/><path d="M2 502.500h487" stroke="#d0221c" stroke-width="1"/></svg>
<div class="c" style="left:226px;width:40px;top:93.25px;font-family:'Liberation Sans',sans-serif;font-weight:bold;letter-spacing:0;font-size:11.5px;line-height:13.5px;color:#f59a2e;"><span style="display:inline-block;padding:0 1.500px;height:11.5px;line-height:11.5px;background:#000">T</span></div>
<div class="c" style="left:225px;width:40px;top:326.25px;font-family:'Liberation Sans',sans-serif;font-weight:bold;letter-spacing:0;font-size:11.5px;line-height:13.5px;color:#f59a2e;"><span style="display:inline-block;padding:0 1.500px;height:11.5px;line-height:11.5px;background:#000">B</span></div>
<div class="a" style="left:3px;top:210.25px;font-family:'Liberation Sans',sans-serif;font-weight:bold;letter-spacing:0;font-size:11.5px;line-height:13.5px;color:#f59a2e;">R</div>
<div class="a" style="right:792px;top:210.25px;font-family:'Liberation Sans',sans-serif;font-weight:bold;letter-spacing:0;font-size:11.5px;line-height:13.5px;color:#f59a2e;">L</div>
<div class="a" style="right:792px;top:323.0px;font-family:'Liberation Sans',sans-serif;font-weight:bold;letter-spacing:0;font-size:12px;line-height:14px;color:#f59a2e;background:#000;">209.6718</div>
<div class="c" style="left:730px;width:40px;top:93.25px;font-family:'Liberation Sans',sans-serif;font-weight:bold;letter-spacing:0;font-size:11.5px;line-height:13.5px;color:#ee1c24;"><span style="display:inline-block;padding:0 1.500px;height:11.5px;line-height:11.5px;background:#000">A</span></div>
<div class="c" style="left:729px;width:40px;top:325.25px;font-family:'Liberation Sans',sans-serif;font-weight:bold;letter-spacing:0;font-size:11.5px;line-height:13.5px;color:#ee1c24;"><span style="display:inline-block;padding:0 1.500px;height:11.5px;line-height:11.5px;background:#000">P</span></div>
<div class="a" style="left:507px;top:210.25px;font-family:'Liberation Sans',sans-serif;font-weight:bold;letter-spacing:0;font-size:11.5px;line-height:13.5px;color:#ee1c24;">R</div>
<div class="a" style="right:286px;top:210.25px;font-family:'Liberation Sans',sans-serif;font-weight:bold;letter-spacing:0;font-size:11.5px;line-height:13.5px;color:#ee1c24;">L</div>
<div class="a" style="left:508px;top:323.0px;font-family:'Liberation Sans',sans-serif;font-weight:bold;letter-spacing:0;font-size:12px;line-height:14px;color:#ee1c24;">-122.00</div>
<div class="a" style="right:287px;top:323.0px;font-family:'Liberation Sans',sans-serif;font-weight:bold;letter-spacing:0;font-size:12px;line-height:14px;color:#ee1c24;">61.25</div>
<div class="c" style="left:226px;width:40px;top:344.25px;font-family:'Liberation Sans',sans-serif;font-weight:bold;letter-spacing:0;font-size:11.5px;line-height:13.5px;color:#7be87b;"><span style="display:inline-block;padding:0 1.500px;height:11.5px;line-height:11.5px;background:#000">T</span></div>
<div class="c" style="left:225px;width:40px;top:578.25px;font-family:'Liberation Sans',sans-serif;font-weight:bold;letter-spacing:0;font-size:11.5px;line-height:13.5px;color:#7be87b;"><span style="display:inline-block;padding:0 1.500px;height:11.5px;line-height:11.5px;background:#000">B</span></div>
<div class="a" style="left:3px;top:460.25px;font-family:'Liberation Sans',sans-serif;font-weight:bold;letter-spacing:0;font-size:11.5px;line-height:13.5px;color:#7be87b;">P</div>
<div class="a" style="right:791px;top:461.25px;font-family:'Liberation Sans',sans-serif;font-weight:bold;letter-spacing:0;font-size:11.5px;line-height:13.5px;color:#7be87b;">A</div>
<div class="a" style="right:792px;top:574.0px;font-family:'Liberation Sans',sans-serif;font-weight:bold;letter-spacing:0;font-size:12px;line-height:14px;color:#7be87b;background:#000;">182.3554</div>
<div class="a" style="left:4px;top:96.5px;color:#5aa2f2;font-weight:bold;letter-spacing:-0.200px">1.25mm Stnd</div>
<div class="a" style="left:4px;top:104.5px;color:#5aa2f2;font-weight:bold;letter-spacing:-0.200px">Coronal<svg style="position:static;display:inline-block;vertical-align:-1px;margin-left:1px" width="6" height="5" viewBox="0 0 6 5"><path d="M0.500 1l2.500 2.500 2.500-2.500" fill="none" stroke="#5aa2f2" stroke-width="1.200"/></svg></div>
<div class="a" style="left:509px;top:96.5px;color:#5aa2f2;font-weight:bold;letter-spacing:-0.200px">1.25mm Stnd</div>
<div class="a" style="left:509px;top:104.5px;color:#5aa2f2;font-weight:bold;letter-spacing:-0.200px">Axial <svg style="position:static;display:inline-block;vertical-align:-1px;margin-left:1px" width="6" height="5" viewBox="0 0 6 5"><path d="M0.500 1l2.500 2.500 2.500-2.500" fill="none" stroke="#5aa2f2" stroke-width="1.200"/></svg></div>
<div class="a" style="left:4px;top:347.5px;color:#5aa2f2;font-weight:bold;letter-spacing:-0.200px">1.25mm Stnd</div>
<div class="a" style="left:4px;top:355.5px;color:#5aa2f2;font-weight:bold;letter-spacing:-0.200px">Sagittal<svg style="position:static;display:inline-block;vertical-align:-1px;margin-left:1px" width="6" height="5" viewBox="0 0 6 5"><path d="M0.500 1l2.500 2.500 2.500-2.500" fill="none" stroke="#5aa2f2" stroke-width="1.200"/></svg></div>
<div class="a" style="left:-14px;top:555.500px;width:27px;height:30.500px;border-radius:50%;background:radial-gradient(circle at 60% 40%,#5fdc7c,#2fc25a 70%,#28a84c);border:1px solid #d4f6dc"></div>
<div class="a sans" style="left:1px;top:565.500px;font-size:7.500px;font-weight:bold;color:#eafff0">28</div>
<div class="a" style="left:988px;top:345px;width:18px;height:246px;background:#f6faf6;"></div>
<svg style="left:988px;top:345px" width="18" height="246" viewBox="988 345 18 246"><rect x="991" y="349" width="1.600" height="1.600" fill="#3da24a"/><rect x="991" y="352" width="1.600" height="1.600" fill="#3da24a"/><rect x="991" y="355" width="1.600" height="1.600" fill="#3da24a"/><rect x="991" y="358" width="1.600" height="1.600" fill="#3da24a"/><rect x="994" y="349" width="1.600" height="1.600" fill="#3da24a"/><rect x="994" y="352" width="1.600" height="1.600" fill="#3da24a"/><rect x="994" y="355" width="1.600" height="1.600" fill="#3da24a"/><rect x="994" y="358" width="1.600" height="1.600" fill="#3da24a"/><rect x="997" y="349" width="1.600" height="1.600" fill="#3da24a"/><rect x="997" y="352" width="1.600" height="1.600" fill="#3da24a"/><rect x="997" y="355" width="1.600" height="1.600" fill="#3da24a"/><rect x="997" y="358" width="1.600" height="1.600" fill="#3da24a"/><rect x="1000" y="349" width="1.600" height="1.600" fill="#3da24a"/><rect x="1000" y="352" width="1.600" height="1.600" fill="#3da24a"/><rect x="1000" y="355" width="1.600" height="1.600" fill="#3da24a"/><rect x="1000" y="358" width="1.600" height="1.600" fill="#3da24a"/><circle cx="995" cy="372" r="4" fill="#d6e9fa" stroke="#4a90d2"/><circle cx="998" cy="375" r="3.500" fill="#9cc8f0" stroke="#4a90d2"/><rect x="991.500" y="388.500" width="9" height="7" fill="#2f9a3c"/><path d="M991 386.500h10" stroke="#444" stroke-dasharray="1.500 1"/><path d="M996 401.500l5 9h-10z" fill="none" stroke="#555"/><path d="M996 405l2.500 5h-5z" fill="none" stroke="#555" stroke-width=".7"/><path d="M996 421l5 2.500v5.500l-5 2.500-5-2.500v-5.500z" fill="#f3a81c" stroke="#b8780c" stroke-width=".8"/><g stroke="#555" fill="none"><path d="M996 440v12M990 446h12"/><path d="M994 442l2-2 2 2M994 450l2 2 2-2M992 444l-2 2 2 2M1000 444l2 2-2 2"/></g><g stroke="#666" fill="none" stroke-width="1.100"><path d="M991 460a5.200 5.200 0 0 1 9.500-1"/><path d="M1001 464a5.200 5.200 0 0 1-9.500 1"/></g><g fill="#fff" stroke="#2a86d6" stroke-linejoin="round"><path d="M996 473l5 2.200v6l-5 2.800-5-2.800v-6z"/><path d="M991 475.200l5 2.600 5-2.600M996 477.800v6.200"/></g><rect x="988.500" y="490" width="16" height="15" fill="#aebfd6"/><path d="M992 502v-7l3-3 3 4 3 2v4z" fill="#e88a1c"/><path d="M992 502h9" stroke="#c33"/><path d="M990 514c3-4.500 9-4.500 12 0c-3 4.500-9 4.500-12 0z" fill="#fff" stroke="#555"/><circle cx="996" cy="514" r="1.800" fill="#555"/><path d="M996 524v13" stroke="#2f9a3c" stroke-width="1.400"/><path d="M989 530.500h14" stroke="#e0301c" stroke-width="1.400"/><path d="M991 535l10-9" stroke="#e8a01c" stroke-width="1.400"/><path d="M992 541v9h9" fill="none" stroke="#f0b090"/><path d="M992 541l-1.500 2h3z M1001 550l-2-1.500v3z" fill="#e0b01c"/><rect x="991.500" y="556.500" width="10" height="10" rx="1.500" fill="#222" stroke="#222"/><path d="M996.500 558.500a3.200 3.200 0 0 1 0 6.400z" fill="#fff"/><path d="M996.500 558.500a3.200 3.200 0 0 0 0 6.400z" fill="#888"/></svg>
<div class="a" style="left:1012px;top:96.5px;color:#333">Project Management</div>
<svg style="left:1256px;top:95px" width="24" height="10" viewBox="0 0 24 10"><g stroke="#333" fill="none" stroke-width="1.100"><path d="M4 3.500h4v3.500h-4z M5.500 3.500v-1.500h4v3.500h-1.500"/><path d="M15 2.500l5 5m0-5l-5 5"/></g></svg>
<div class="a" style="left:1009px;top:107px;width:271px;height:1px;background:#e6e6e6;"></div>
<div class="tabg" style="left:1010px;top:109px;width:36px;height:14px;line-height:13.5px">Images</div>
<div class="tabw" style="left:1047px;top:108px;width:34px;height:16px;line-height:15.5px">Masks</div>
<div class="tabg" style="left:1082px;top:109px;width:59px;height:14px;line-height:13.5px">Measurements</div>
<div class="tabg" style="left:1143px;top:109px;width:33px;height:14px;line-height:13.5px">X-Ray</div>
<div class="a" style="left:1011px;top:124px;width:268px;height:135px;border:1px solid #d6d6d6;background:#fff"></div>
<div class="a sans" style="left:1014px;top:128.5px;width:90px;overflow:hidden;font-size:8.500px;line-height:11px;color:#222">Name</div>
<div class="a sans" style="left:1114px;top:128.5px;width:24px;overflow:hidden;font-size:8.500px;line-height:11px;color:#222">Visibl</div>
<div class="a sans" style="left:1140px;top:128.5px;width:55px;overflow:hidden;font-size:8.500px;line-height:11px;color:#222">Lower Threshold</div>
<div class="a sans" style="left:1200px;top:128.5px;width:55px;overflow:hidden;font-size:8.500px;line-height:11px;color:#222">Upper Threshold</div>
<div class="a sans" style="left:1260px;top:128.5px;width:18px;overflow:hidden;font-size:8.500px;line-height:11px;color:#222">Assembly</div>
<div class="a" style="left:1012px;top:248px;width:266px;height:10px;background:#e4e4e4;border:1px solid #c8c8c8"></div>
<div class="a" style="left:1023px;top:248px;width:163px;height:10px;background:#fff;border:1px solid #bdbdbd"></div>
<div class="a" style="left:1012px;top:248px;width:11px;height:10px;background:#f4f4f4;border:1px solid #bdbdbd"></div>
<div class="a" style="left:1267px;top:248px;width:11px;height:10px;background:#f4f4f4;border:1px solid #bdbdbd"></div>
<svg style="left:1012px;top:248px" width="266" height="10" viewBox="0 0 266 10"><path d="M7 2.500l-3 2.500 3 2.500z M259 2.500l3 2.500-3 2.500z" fill="#444"/></svg>
<div class="tabw" style="left:1010px;top:279px;width:40px;height:16px;line-height:15.5px">Objects</div>
<div class="tabg" style="left:1052px;top:280px;width:72px;height:14px;line-height:13.5px">Reslice Objects</div>
<div class="tabg" style="left:1126px;top:280px;width:56px;height:14px;line-height:13.5px">Soft tissue</div>
<div class="a" style="left:1011px;top:295px;width:268px;height:105px;border:1px solid #d6d6d6;background:#fff"></div>
<div class="a sans" style="left:1014px;top:299.5px;width:90px;overflow:hidden;font-size:8.500px;line-height:11px;color:#222">Name</div>
<div class="a sans" style="left:1114px;top:299.5px;width:24px;overflow:hidden;font-size:8.500px;line-height:11px;color:#222">Visibl</div>
<div class="a sans" style="left:1140px;top:299.5px;width:35px;overflow:hidden;font-size:8.500px;line-height:11px;color:#222">Contour</div>
<div class="a sans" style="left:1177px;top:299.5px;width:28px;overflow:hidden;font-size:8.500px;line-height:11px;color:#222">Transparency</div>
<div class="a sans" style="left:1210px;top:299.5px;width:40px;overflow:hidden;font-size:8.500px;line-height:11px;color:#222">Images</div>
<div class="a" style="left:1012px;top:389px;width:266px;height:10px;background:#e4e4e4;border:1px solid #c8c8c8"></div>
<div class="a" style="left:1023px;top:389px;width:195px;height:10px;background:#fff;border:1px solid #bdbdbd"></div>
<div class="a" style="left:1012px;top:389px;width:11px;height:10px;background:#f4f4f4;border:1px solid #bdbdbd"></div>
<div class="a" style="left:1267px;top:389px;width:11px;height:10px;background:#f4f4f4;border:1px solid #bdbdbd"></div>
<svg style="left:1012px;top:389px" width="266" height="10" viewBox="0 0 266 10"><path d="M7 2.500l-3 2.500 3 2.500z M259 2.500l3 2.500-3 2.500z" fill="#444"/></svg>
<div class="tabw" style="left:1010px;top:419px;width:84px;height:16px;line-height:15.5px">Simulation Objects</div>
<div class="tabg" style="left:1095px;top:420px;width:29px;height:14px;line-height:13.5px">Snap</div>
<div class="a" style="left:1011px;top:435px;width:268px;height:228px;border:1px solid #d6d6d6;background:#fff"></div>
<div class="a sans" style="left:1014px;top:439.5px;width:90px;overflow:hidden;font-size:8.500px;line-height:11px;color:#222">Name</div>
<div class="a sans" style="left:1114px;top:439.5px;width:24px;overflow:hidden;font-size:8.500px;line-height:11px;color:#222">Visibl</div>
<div class="a sans" style="left:1140px;top:439.5px;width:35px;overflow:hidden;font-size:8.500px;line-height:11px;color:#222">Contour</div>
<div class="a" style="left:1009px;top:276px;width:271px;height:1px;border-top:1px dotted #bbb"></div>
<div class="a" style="left:1009px;top:417px;width:271px;height:1px;border-top:1px dotted #bbb"></div>
<svg style="left:1180px;top:261px" width="100" height="12" viewBox="1180 261 100 12"><g fill="none" stroke="#777" stroke-width="0.9"><path d="M1189 267h8M1193 263v8"/><path d="M1205 263v5m-2-2l2 2 2-2M1201 268v3h8v-3" stroke="#aaa"/><path d="M1212.5 263.5l7 7m0-7l-7 7" stroke="#999"/><rect x="1224" y="263.5" width="8" height="7" rx="1"/><path d="M1228 266v3M1228 264.5v.5"/><path d="M1235.5 263h5l2.500 2.500v5.500h-7.500z M1240.5 263v2.500h2.500"/><path d="M1247 269l5-6 3 3-5 6z M1247 271h6"/><path d="M1262 263l4 2v4.500l-4 2-4-2v-4.500z M1258 265l4 2 4-2M1262 267v4.500" stroke="#999"/><circle cx="1273" cy="267" r="4.200"/><path d="M1271 266l2 2 2-2"/></g></svg>
<svg style="left:1180px;top:401px" width="100" height="12" viewBox="1180 401 100 12"><g fill="none" stroke="#777" stroke-width="0.9"><path d="M1212 407h8M1216 403v8"/><path d="M1224.5 403.5l7 7m0-7l-7 7" stroke="#999"/><rect x="1235" y="403.5" width="8" height="7" rx="1"/><path d="M1239 406v3M1239 404.5v.5"/><path d="M1247.5 403h5l2.500 2.500v5.500h-7.500z M1252.5 403v2.500h2.500"/><path d="M1262 403l4 2v4.500l-4 2-4-2v-4.500z M1258 405l4 2 4-2M1262 407v4.500" stroke="#999"/><circle cx="1273" cy="407" r="4.200"/><path d="M1271 406l2 2 2-2"/></g></svg>
<svg style="left:1266px;top:664.500px" width="14" height="12" viewBox="0 0 14 12"><circle cx="7" cy="6" r="4.200" fill="#fff" stroke="#777" stroke-width=".9"/><path d="M5 5l2 2 2-2" fill="none" stroke="#777" stroke-width=".9"/></svg>
<div class="a" style="left:0px;top:608px;width:1007px;height:1px;background:#9a9a9a;"></div>
<div class="a" style="left:0px;top:595px;width:29px;height:14px;background:#fff;border:1px solid #c8c8c8;border-bottom:none"></div>
<div class="a" style="left:8px;top:598.5px;">Log</div>
<div class="a" style="left:36px;top:598.5px;">Volume Rendering</div>
<div class="a" style="left:116px;top:598.5px;">Contrast</div>
<div class="a" style="left:0;top:609px;width:994px;height:68px;overflow:hidden">
<div class="a log" style="left:3px;top:-2px">[21:35:35] <b>Object deleted</b></div>
<div class="a log" style="left:22px;top:8px">name:</div>
<div class="a log" style="left:3px;top:18px">[21:35:35] <b>Object deleted</b></div>
<div class="a log" style="left:22px;top:28px">name: Sagittal251.7538</div>
<div class="a log" style="left:3px;top:38px">[21:39:59] <b>Autosaving</b></div>
<div class="a log" style="left:3px;top:48px">[21:39:59] <b>Save project</b></div>
<div class="a log" style="left:22px;top:58px">file name: C:\Users\ADMINI~1\AppData\Local\Temp\Untitled_autosave_7540.mcs</div>
</div>
<div class="a" style="left:995px;top:609px;width:12px;height:68px;background:#fff;border-left:1px solid #d0d0d0"></div>
<div class="a" style="left:996px;top:620px;width:10px;height:34px;background:#e6e6e6;border:1px solid #c4c4c4"></div>
<div class="a" style="left:996px;top:609px;width:10px;height:10px;background:#f6f6f6;border:1px solid #c4c4c4"></div>
<div class="a" style="left:996px;top:667px;width:10px;height:10px;background:#f6f6f6;border:1px solid #c4c4c4"></div>
<svg style="left:996px;top:609px" width="10" height="68" viewBox="0 0 10 68"><path d="M2 6.500l3-3 3 3z M2 61.500l3 3 3-3z" fill="#444"/></svg>
<div class="a" style="left:0px;top:678px;width:1280px;height:15px;background:#2b5797;"></div>
<div class="a" style="left:1px;top:681.5px;color:#0e1a30">Ready</div>
<div class="a" style="left:0px;top:693px;width:1280px;height:27px;background:#8497ae;border-top:1px solid #b9c6d6"></div>
<div class="a" style="left:6px;top:695px;width:24px;height:24px;border-radius:50%;background:radial-gradient(circle at 50% 30%,#6fb4e8,#2660a8 55%,#123a72)"></div>
<svg style="left:10px;top:699px" width="16" height="16" viewBox="0 0 16 16"><path d="M2 4.500c2-1 3.500-1 5 0v3c-1.500-1-3-1-5 0z" fill="#e6532a"/><path d="M8.500 4.500c2-1 3.500-1 5 0v3c-1.500-1-3-1-5 0z" fill="#7cc242"/><path d="M2 9c2-1 3.500-1 5 0v3c-1.500-1-3-1-5 0z" fill="#2f9ae0"/><path d="M8.500 9c2-1 3.500-1 5 0v3c-1.500-1-3-1-5 0z" fill="#f7c325"/></svg>
<div class="a" style="left:49px;top:696px;width:21px;height:21px;border-radius:50%;background:#2f80e4;border:1.500px solid #f4f8ff"></div>
<div class="a sans" style="left:54px;top:698px;font-size:15px;line-height:17px;font-weight:bold;color:#fff">S</div>
<div class="a" style="left:81px;top:695px;width:106px;height:25px;background:linear-gradient(#c9d3df,#aebccd);border:1px solid #dfe6ee;border-radius:2px"></div>
<div class="a" style="left:85px;top:697px;width:24px;height:22px;background:#f8f8f8"></div>
<svg style="left:87px;top:698px" width="20" height="20" viewBox="0 0 20 20"><g fill="none" stroke-linecap="round"><path d="M5 5l8-2.500M6 6l7 5M13 11.500l-7 2.500" stroke="#2f7fc6" stroke-width="2.200"/><path d="M4 17.500h10" stroke="#f0a020" stroke-width="1.800"/></g></svg>
<div class="a sans" style="left:112px;top:701px;font-size:9px;line-height:11px;color:#fff">ÖÎÑ_²Á - Untitle...</div>
<div class="a sans" style="left:1130px;top:699px;width:11px;height:11px;background:#e8501c;border-radius:2px;color:#fff;font-size:9px;line-height:11px;font-weight:bold;text-align:center">S</div>
<div class="a sans" style="left:1145px;top:699px;width:10px;height:10px;background:#2a4fae;border-radius:50%;color:#fff;font-size:8px;line-height:10px;font-weight:bold;text-align:center">?</div>
<div class="a" style="left:1167px;top:581px;width:84px;font-family:'Liberation Serif','Noto Serif CJK SC',serif;font-weight:900;color:#111;font-size:13px;line-height:14px;letter-spacing:2.300px;transform:scaleX(.78);transform-origin:0 0;white-space:nowrap">更多教程请关注</div>
<div class="a" style="left:1144px;top:594px;width:130px;font-family:'Liberation Serif','Noto Serif CJK SC',serif;font-weight:900;color:#111;font-size:13px;line-height:14px;letter-spacing:2.300px;transform:scaleX(.78);transform-origin:0 0;white-space:nowrap">微信公众号<span style="font-size:17px;letter-spacing:1.200px;font-weight:bold">Create-VX</span></div>
<svg style="left:1155px;top:608.5px" width="109.5" height="110" viewBox="0 0 109.5 110"><rect width="109.5" height="110" fill="#fff"/><path d="M28.51 7.80h2.88v2.88h-2.88zM31.23 7.80h2.88v2.88h-2.88zM36.68 7.80h2.88v2.88h-2.88zM42.13 7.80h2.88v2.88h-2.88zM44.86 7.80h2.88v2.88h-2.88zM50.31 7.80h2.88v2.88h-2.88zM53.04 7.80h2.88v2.88h-2.88zM55.76 7.80h2.88v2.88h-2.88zM58.49 7.80h2.88v2.88h-2.88zM61.21 7.80h2.88v2.88h-2.88zM66.67 7.80h2.88v2.88h-2.88zM69.39 7.80h2.88v2.88h-2.88zM28.51 10.53h2.88v2.88h-2.88zM33.96 10.53h2.88v2.88h-2.88zM39.41 10.53h2.88v2.88h-2.88zM42.13 10.53h2.88v2.88h-2.88zM44.86 10.53h2.88v2.88h-2.88zM47.59 10.53h2.88v2.88h-2.88zM53.04 10.53h2.88v2.88h-2.88zM61.21 10.53h2.88v2.88h-2.88zM66.67 10.53h2.88v2.88h-2.88zM69.39 10.53h2.88v2.88h-2.88zM72.12 10.53h2.88v2.88h-2.88zM77.57 10.53h2.88v2.88h-2.88zM28.51 13.25h2.88v2.88h-2.88zM33.96 13.25h2.88v2.88h-2.88zM36.68 13.25h2.88v2.88h-2.88zM44.86 13.25h2.88v2.88h-2.88zM58.49 13.25h2.88v2.88h-2.88zM63.94 13.25h2.88v2.88h-2.88zM66.67 13.25h2.88v2.88h-2.88zM72.12 13.25h2.88v2.88h-2.88zM77.57 13.25h2.88v2.88h-2.88zM39.41 15.98h2.88v2.88h-2.88zM50.31 15.98h2.88v2.88h-2.88zM63.94 15.98h2.88v2.88h-2.88zM77.57 15.98h2.88v2.88h-2.88zM28.51 18.70h2.88v2.88h-2.88zM33.96 18.70h2.88v2.88h-2.88zM36.68 18.70h2.88v2.88h-2.88zM39.41 18.70h2.88v2.88h-2.88zM42.13 18.70h2.88v2.88h-2.88zM44.86 18.70h2.88v2.88h-2.88zM50.31 18.70h2.88v2.88h-2.88zM53.04 18.70h2.88v2.88h-2.88zM55.76 18.70h2.88v2.88h-2.88zM61.21 18.70h2.88v2.88h-2.88zM63.94 18.70h2.88v2.88h-2.88zM77.57 18.70h2.88v2.88h-2.88zM28.51 21.43h2.88v2.88h-2.88zM31.23 21.43h2.88v2.88h-2.88zM39.41 21.43h2.88v2.88h-2.88zM42.13 21.43h2.88v2.88h-2.88zM44.86 21.43h2.88v2.88h-2.88zM47.59 21.43h2.88v2.88h-2.88zM55.76 21.43h2.88v2.88h-2.88zM58.49 21.43h2.88v2.88h-2.88zM61.21 21.43h2.88v2.88h-2.88zM63.94 21.43h2.88v2.88h-2.88zM31.23 24.15h2.88v2.88h-2.88zM44.86 24.15h2.88v2.88h-2.88zM47.59 24.15h2.88v2.88h-2.88zM50.31 24.15h2.88v2.88h-2.88zM55.76 24.15h2.88v2.88h-2.88zM58.49 24.15h2.88v2.88h-2.88zM61.21 24.15h2.88v2.88h-2.88zM63.94 24.15h2.88v2.88h-2.88zM66.67 24.15h2.88v2.88h-2.88zM69.39 24.15h2.88v2.88h-2.88zM72.12 24.15h2.88v2.88h-2.88zM74.84 24.15h2.88v2.88h-2.88zM77.57 24.15h2.88v2.88h-2.88zM28.51 26.88h2.88v2.88h-2.88zM31.23 26.88h2.88v2.88h-2.88zM39.41 26.88h2.88v2.88h-2.88zM42.13 26.88h2.88v2.88h-2.88zM44.86 26.88h2.88v2.88h-2.88zM47.59 26.88h2.88v2.88h-2.88zM50.31 26.88h2.88v2.88h-2.88zM58.49 26.88h2.88v2.88h-2.88zM63.94 26.88h2.88v2.88h-2.88zM66.67 26.88h2.88v2.88h-2.88zM69.39 26.88h2.88v2.88h-2.88zM72.12 26.88h2.88v2.88h-2.88zM77.57 26.88h2.88v2.88h-2.88zM6.70 29.61h2.88v2.88h-2.88zM14.88 29.61h2.88v2.88h-2.88zM20.33 29.61h2.88v2.88h-2.88zM33.96 29.61h2.88v2.88h-2.88zM36.68 29.61h2.88v2.88h-2.88zM39.41 29.61h2.88v2.88h-2.88zM50.31 29.61h2.88v2.88h-2.88zM53.04 29.61h2.88v2.88h-2.88zM72.12 29.61h2.88v2.88h-2.88zM77.57 29.61h2.88v2.88h-2.88zM80.29 29.61h2.88v2.88h-2.88zM83.02 29.61h2.88v2.88h-2.88zM85.75 29.61h2.88v2.88h-2.88zM88.47 29.61h2.88v2.88h-2.88zM96.65 29.61h2.88v2.88h-2.88zM12.15 32.33h2.88v2.88h-2.88zM14.88 32.33h2.88v2.88h-2.88zM17.60 32.33h2.88v2.88h-2.88zM20.33 32.33h2.88v2.88h-2.88zM23.05 32.33h2.88v2.88h-2.88zM42.13 32.33h2.88v2.88h-2.88zM58.49 32.33h2.88v2.88h-2.88zM63.94 32.33h2.88v2.88h-2.88zM72.12 32.33h2.88v2.88h-2.88zM74.84 32.33h2.88v2.88h-2.88zM83.02 32.33h2.88v2.88h-2.88zM85.75 32.33h2.88v2.88h-2.88zM88.47 32.33h2.88v2.88h-2.88zM96.65 32.33h2.88v2.88h-2.88zM12.15 35.06h2.88v2.88h-2.88zM17.60 35.06h2.88v2.88h-2.88zM20.33 35.06h2.88v2.88h-2.88zM33.96 35.06h2.88v2.88h-2.88zM42.13 35.06h2.88v2.88h-2.88zM44.86 35.06h2.88v2.88h-2.88zM47.59 35.06h2.88v2.88h-2.88zM50.31 35.06h2.88v2.88h-2.88zM55.76 35.06h2.88v2.88h-2.88zM58.49 35.06h2.88v2.88h-2.88zM61.21 35.06h2.88v2.88h-2.88zM66.67 35.06h2.88v2.88h-2.88zM69.39 35.06h2.88v2.88h-2.88zM77.57 35.06h2.88v2.88h-2.88zM91.20 35.06h2.88v2.88h-2.88zM93.92 35.06h2.88v2.88h-2.88zM96.65 35.06h2.88v2.88h-2.88zM99.37 35.06h2.88v2.88h-2.88zM9.43 37.78h2.88v2.88h-2.88zM20.33 37.78h2.88v2.88h-2.88zM31.23 37.78h2.88v2.88h-2.88zM36.68 37.78h2.88v2.88h-2.88zM39.41 37.78h2.88v2.88h-2.88zM55.76 37.78h2.88v2.88h-2.88zM69.39 37.78h2.88v2.88h-2.88zM88.47 37.78h2.88v2.88h-2.88zM99.37 37.78h2.88v2.88h-2.88zM6.70 40.51h2.88v2.88h-2.88zM9.43 40.51h2.88v2.88h-2.88zM12.15 40.51h2.88v2.88h-2.88zM14.88 40.51h2.88v2.88h-2.88zM17.60 40.51h2.88v2.88h-2.88zM28.51 40.51h2.88v2.88h-2.88zM36.68 40.51h2.88v2.88h-2.88zM44.86 40.51h2.88v2.88h-2.88zM50.31 40.51h2.88v2.88h-2.88zM61.21 40.51h2.88v2.88h-2.88zM63.94 40.51h2.88v2.88h-2.88zM69.39 40.51h2.88v2.88h-2.88zM72.12 40.51h2.88v2.88h-2.88zM74.84 40.51h2.88v2.88h-2.88zM80.29 40.51h2.88v2.88h-2.88zM85.75 40.51h2.88v2.88h-2.88zM88.47 40.51h2.88v2.88h-2.88zM91.20 40.51h2.88v2.88h-2.88zM99.37 40.51h2.88v2.88h-2.88zM14.88 43.23h2.88v2.88h-2.88zM17.60 43.23h2.88v2.88h-2.88zM20.33 43.23h2.88v2.88h-2.88zM25.78 43.23h2.88v2.88h-2.88zM28.51 43.23h2.88v2.88h-2.88zM31.23 43.23h2.88v2.88h-2.88zM39.41 43.23h2.88v2.88h-2.88zM66.67 43.23h2.88v2.88h-2.88zM77.57 43.23h2.88v2.88h-2.88zM80.29 43.23h2.88v2.88h-2.88zM85.75 43.23h2.88v2.88h-2.88zM88.47 43.23h2.88v2.88h-2.88zM99.37 43.23h2.88v2.88h-2.88zM9.43 45.96h2.88v2.88h-2.88zM14.88 45.96h2.88v2.88h-2.88zM17.60 45.96h2.88v2.88h-2.88zM25.78 45.96h2.88v2.88h-2.88zM28.51 45.96h2.88v2.88h-2.88zM33.96 45.96h2.88v2.88h-2.88zM36.68 45.96h2.88v2.88h-2.88zM39.41 45.96h2.88v2.88h-2.88zM66.67 45.96h2.88v2.88h-2.88zM69.39 45.96h2.88v2.88h-2.88zM72.12 45.96h2.88v2.88h-2.88zM74.84 45.96h2.88v2.88h-2.88zM80.29 45.96h2.88v2.88h-2.88zM85.75 45.96h2.88v2.88h-2.88zM88.47 45.96h2.88v2.88h-2.88zM91.20 45.96h2.88v2.88h-2.88zM93.92 45.96h2.88v2.88h-2.88zM96.65 45.96h2.88v2.88h-2.88zM9.43 48.69h2.88v2.88h-2.88zM17.60 48.69h2.88v2.88h-2.88zM23.05 48.69h2.88v2.88h-2.88zM31.23 48.69h2.88v2.88h-2.88zM66.67 48.69h2.88v2.88h-2.88zM77.57 48.69h2.88v2.88h-2.88zM80.29 48.69h2.88v2.88h-2.88zM83.02 48.69h2.88v2.88h-2.88zM85.75 48.69h2.88v2.88h-2.88zM88.47 48.69h2.88v2.88h-2.88zM93.92 48.69h2.88v2.88h-2.88zM96.65 48.69h2.88v2.88h-2.88zM99.37 48.69h2.88v2.88h-2.88zM14.88 51.41h2.88v2.88h-2.88zM17.60 51.41h2.88v2.88h-2.88zM20.33 51.41h2.88v2.88h-2.88zM23.05 51.41h2.88v2.88h-2.88zM25.78 51.41h2.88v2.88h-2.88zM28.51 51.41h2.88v2.88h-2.88zM31.23 51.41h2.88v2.88h-2.88zM66.67 51.41h2.88v2.88h-2.88zM72.12 51.41h2.88v2.88h-2.88zM74.84 51.41h2.88v2.88h-2.88zM77.57 51.41h2.88v2.88h-2.88zM80.29 51.41h2.88v2.88h-2.88zM88.47 51.41h2.88v2.88h-2.88zM93.92 51.41h2.88v2.88h-2.88zM96.65 51.41h2.88v2.88h-2.88zM99.37 51.41h2.88v2.88h-2.88zM6.70 54.14h2.88v2.88h-2.88zM9.43 54.14h2.88v2.88h-2.88zM12.15 54.14h2.88v2.88h-2.88zM14.88 54.14h2.88v2.88h-2.88zM17.60 54.14h2.88v2.88h-2.88zM36.68 54.14h2.88v2.88h-2.88zM39.41 54.14h2.88v2.88h-2.88zM69.39 54.14h2.88v2.88h-2.88zM77.57 54.14h2.88v2.88h-2.88zM93.92 54.14h2.88v2.88h-2.88zM25.78 56.86h2.88v2.88h-2.88zM28.51 56.86h2.88v2.88h-2.88zM31.23 56.86h2.88v2.88h-2.88zM33.96 56.86h2.88v2.88h-2.88zM36.68 56.86h2.88v2.88h-2.88zM80.29 56.86h2.88v2.88h-2.88zM96.65 56.86h2.88v2.88h-2.88zM6.70 59.59h2.88v2.88h-2.88zM9.43 59.59h2.88v2.88h-2.88zM12.15 59.59h2.88v2.88h-2.88zM17.60 59.59h2.88v2.88h-2.88zM28.51 59.59h2.88v2.88h-2.88zM69.39 59.59h2.88v2.88h-2.88zM72.12 59.59h2.88v2.88h-2.88zM74.84 59.59h2.88v2.88h-2.88zM80.29 59.59h2.88v2.88h-2.88zM85.75 59.59h2.88v2.88h-2.88zM88.47 59.59h2.88v2.88h-2.88zM91.20 59.59h2.88v2.88h-2.88zM6.70 62.31h2.88v2.88h-2.88zM12.15 62.31h2.88v2.88h-2.88zM14.88 62.31h2.88v2.88h-2.88zM17.60 62.31h2.88v2.88h-2.88zM23.05 62.31h2.88v2.88h-2.88zM31.23 62.31h2.88v2.88h-2.88zM33.96 62.31h2.88v2.88h-2.88zM66.67 62.31h2.88v2.88h-2.88zM69.39 62.31h2.88v2.88h-2.88zM72.12 62.31h2.88v2.88h-2.88zM77.57 62.31h2.88v2.88h-2.88zM83.02 62.31h2.88v2.88h-2.88zM91.20 62.31h2.88v2.88h-2.88zM9.43 65.04h2.88v2.88h-2.88zM17.60 65.04h2.88v2.88h-2.88zM20.33 65.04h2.88v2.88h-2.88zM25.78 65.04h2.88v2.88h-2.88zM28.51 65.04h2.88v2.88h-2.88zM31.23 65.04h2.88v2.88h-2.88zM33.96 65.04h2.88v2.88h-2.88zM36.68 65.04h2.88v2.88h-2.88zM66.67 65.04h2.88v2.88h-2.88zM74.84 65.04h2.88v2.88h-2.88zM85.75 65.04h2.88v2.88h-2.88zM88.47 65.04h2.88v2.88h-2.88zM91.20 65.04h2.88v2.88h-2.88zM99.37 65.04h2.88v2.88h-2.88zM6.70 67.77h2.88v2.88h-2.88zM9.43 67.77h2.88v2.88h-2.88zM12.15 67.77h2.88v2.88h-2.88zM14.88 67.77h2.88v2.88h-2.88zM20.33 67.77h2.88v2.88h-2.88zM25.78 67.77h2.88v2.88h-2.88zM28.51 67.77h2.88v2.88h-2.88zM33.96 67.77h2.88v2.88h-2.88zM36.68 67.77h2.88v2.88h-2.88zM61.21 67.77h2.88v2.88h-2.88zM66.67 67.77h2.88v2.88h-2.88zM74.84 67.77h2.88v2.88h-2.88zM77.57 67.77h2.88v2.88h-2.88zM83.02 67.77h2.88v2.88h-2.88zM88.47 67.77h2.88v2.88h-2.88zM91.20 67.77h2.88v2.88h-2.88zM99.37 67.77h2.88v2.88h-2.88zM9.43 70.49h2.88v2.88h-2.88zM14.88 70.49h2.88v2.88h-2.88zM17.60 70.49h2.88v2.88h-2.88zM20.33 70.49h2.88v2.88h-2.88zM23.05 70.49h2.88v2.88h-2.88zM31.23 70.49h2.88v2.88h-2.88zM39.41 70.49h2.88v2.88h-2.88zM42.13 70.49h2.88v2.88h-2.88zM44.86 70.49h2.88v2.88h-2.88zM47.59 70.49h2.88v2.88h-2.88zM50.31 70.49h2.88v2.88h-2.88zM53.04 70.49h2.88v2.88h-2.88zM55.76 70.49h2.88v2.88h-2.88zM58.49 70.49h2.88v2.88h-2.88zM69.39 70.49h2.88v2.88h-2.88zM72.12 70.49h2.88v2.88h-2.88zM77.57 70.49h2.88v2.88h-2.88zM80.29 70.49h2.88v2.88h-2.88zM83.02 70.49h2.88v2.88h-2.88zM85.75 70.49h2.88v2.88h-2.88zM91.20 70.49h2.88v2.88h-2.88zM6.70 73.22h2.88v2.88h-2.88zM9.43 73.22h2.88v2.88h-2.88zM12.15 73.22h2.88v2.88h-2.88zM14.88 73.22h2.88v2.88h-2.88zM17.60 73.22h2.88v2.88h-2.88zM28.51 73.22h2.88v2.88h-2.88zM31.23 73.22h2.88v2.88h-2.88zM44.86 73.22h2.88v2.88h-2.88zM47.59 73.22h2.88v2.88h-2.88zM61.21 73.22h2.88v2.88h-2.88zM63.94 73.22h2.88v2.88h-2.88zM66.67 73.22h2.88v2.88h-2.88zM85.75 73.22h2.88v2.88h-2.88zM91.20 73.22h2.88v2.88h-2.88zM96.65 73.22h2.88v2.88h-2.88zM9.43 75.94h2.88v2.88h-2.88zM12.15 75.94h2.88v2.88h-2.88zM14.88 75.94h2.88v2.88h-2.88zM23.05 75.94h2.88v2.88h-2.88zM25.78 75.94h2.88v2.88h-2.88zM33.96 75.94h2.88v2.88h-2.88zM36.68 75.94h2.88v2.88h-2.88zM42.13 75.94h2.88v2.88h-2.88zM44.86 75.94h2.88v2.88h-2.88zM47.59 75.94h2.88v2.88h-2.88zM61.21 75.94h2.88v2.88h-2.88zM63.94 75.94h2.88v2.88h-2.88zM72.12 75.94h2.88v2.88h-2.88zM74.84 75.94h2.88v2.88h-2.88zM83.02 75.94h2.88v2.88h-2.88zM85.75 75.94h2.88v2.88h-2.88zM93.92 75.94h2.88v2.88h-2.88zM96.65 75.94h2.88v2.88h-2.88zM99.37 75.94h2.88v2.88h-2.88zM6.70 78.67h2.88v2.88h-2.88zM12.15 78.67h2.88v2.88h-2.88zM23.05 78.67h2.88v2.88h-2.88zM28.51 78.67h2.88v2.88h-2.88zM33.96 78.67h2.88v2.88h-2.88zM36.68 78.67h2.88v2.88h-2.88zM42.13 78.67h2.88v2.88h-2.88zM50.31 78.67h2.88v2.88h-2.88zM53.04 78.67h2.88v2.88h-2.88zM55.76 78.67h2.88v2.88h-2.88zM63.94 78.67h2.88v2.88h-2.88zM66.67 78.67h2.88v2.88h-2.88zM69.39 78.67h2.88v2.88h-2.88zM74.84 78.67h2.88v2.88h-2.88zM77.57 78.67h2.88v2.88h-2.88zM80.29 78.67h2.88v2.88h-2.88zM83.02 78.67h2.88v2.88h-2.88zM99.37 78.67h2.88v2.88h-2.88zM28.51 81.39h2.88v2.88h-2.88zM36.68 81.39h2.88v2.88h-2.88zM42.13 81.39h2.88v2.88h-2.88zM44.86 81.39h2.88v2.88h-2.88zM47.59 81.39h2.88v2.88h-2.88zM50.31 81.39h2.88v2.88h-2.88zM53.04 81.39h2.88v2.88h-2.88zM55.76 81.39h2.88v2.88h-2.88zM58.49 81.39h2.88v2.88h-2.88zM63.94 81.39h2.88v2.88h-2.88zM69.39 81.39h2.88v2.88h-2.88zM72.12 81.39h2.88v2.88h-2.88zM80.29 81.39h2.88v2.88h-2.88zM83.02 81.39h2.88v2.88h-2.88zM88.47 81.39h2.88v2.88h-2.88zM93.92 81.39h2.88v2.88h-2.88zM96.65 81.39h2.88v2.88h-2.88zM28.51 84.12h2.88v2.88h-2.88zM31.23 84.12h2.88v2.88h-2.88zM39.41 84.12h2.88v2.88h-2.88zM42.13 84.12h2.88v2.88h-2.88zM44.86 84.12h2.88v2.88h-2.88zM50.31 84.12h2.88v2.88h-2.88zM58.49 84.12h2.88v2.88h-2.88zM61.21 84.12h2.88v2.88h-2.88zM69.39 84.12h2.88v2.88h-2.88zM74.84 84.12h2.88v2.88h-2.88zM77.57 84.12h2.88v2.88h-2.88zM80.29 84.12h2.88v2.88h-2.88zM93.92 84.12h2.88v2.88h-2.88zM96.65 84.12h2.88v2.88h-2.88zM33.96 86.85h2.88v2.88h-2.88zM36.68 86.85h2.88v2.88h-2.88zM39.41 86.85h2.88v2.88h-2.88zM47.59 86.85h2.88v2.88h-2.88zM63.94 86.85h2.88v2.88h-2.88zM66.67 86.85h2.88v2.88h-2.88zM69.39 86.85h2.88v2.88h-2.88zM74.84 86.85h2.88v2.88h-2.88zM77.57 86.85h2.88v2.88h-2.88zM83.02 86.85h2.88v2.88h-2.88zM85.75 86.85h2.88v2.88h-2.88zM88.47 86.85h2.88v2.88h-2.88zM93.92 86.85h2.88v2.88h-2.88zM31.23 89.57h2.88v2.88h-2.88zM33.96 89.57h2.88v2.88h-2.88zM36.68 89.57h2.88v2.88h-2.88zM44.86 89.57h2.88v2.88h-2.88zM47.59 89.57h2.88v2.88h-2.88zM50.31 89.57h2.88v2.88h-2.88zM66.67 89.57h2.88v2.88h-2.88zM72.12 89.57h2.88v2.88h-2.88zM77.57 89.57h2.88v2.88h-2.88zM83.02 89.57h2.88v2.88h-2.88zM85.75 89.57h2.88v2.88h-2.88zM88.47 89.57h2.88v2.88h-2.88zM91.20 89.57h2.88v2.88h-2.88zM99.37 89.57h2.88v2.88h-2.88zM28.51 92.30h2.88v2.88h-2.88zM36.68 92.30h2.88v2.88h-2.88zM47.59 92.30h2.88v2.88h-2.88zM61.21 92.30h2.88v2.88h-2.88zM63.94 92.30h2.88v2.88h-2.88zM66.67 92.30h2.88v2.88h-2.88zM69.39 92.30h2.88v2.88h-2.88zM80.29 92.30h2.88v2.88h-2.88zM85.75 92.30h2.88v2.88h-2.88zM88.47 92.30h2.88v2.88h-2.88zM96.65 92.30h2.88v2.88h-2.88zM31.23 95.02h2.88v2.88h-2.88zM33.96 95.02h2.88v2.88h-2.88zM36.68 95.02h2.88v2.88h-2.88zM39.41 95.02h2.88v2.88h-2.88zM42.13 95.02h2.88v2.88h-2.88zM50.31 95.02h2.88v2.88h-2.88zM53.04 95.02h2.88v2.88h-2.88zM55.76 95.02h2.88v2.88h-2.88zM61.21 95.02h2.88v2.88h-2.88zM63.94 95.02h2.88v2.88h-2.88zM66.67 95.02h2.88v2.88h-2.88zM74.84 95.02h2.88v2.88h-2.88zM77.57 95.02h2.88v2.88h-2.88zM80.29 95.02h2.88v2.88h-2.88zM88.47 95.02h2.88v2.88h-2.88zM91.20 95.02h2.88v2.88h-2.88zM96.65 95.02h2.88v2.88h-2.88zM99.37 95.02h2.88v2.88h-2.88zM28.51 97.75h2.88v2.88h-2.88zM33.96 97.75h2.88v2.88h-2.88zM39.41 97.75h2.88v2.88h-2.88zM42.13 97.75h2.88v2.88h-2.88zM50.31 97.75h2.88v2.88h-2.88zM53.04 97.75h2.88v2.88h-2.88zM58.49 97.75h2.88v2.88h-2.88zM61.21 97.75h2.88v2.88h-2.88zM66.67 97.75h2.88v2.88h-2.88zM72.12 97.75h2.88v2.88h-2.88zM77.57 97.75h2.88v2.88h-2.88zM80.29 97.75h2.88v2.88h-2.88zM83.02 97.75h2.88v2.88h-2.88zM93.92 97.75h2.88v2.88h-2.88zM99.37 97.75h2.88v2.88h-2.88zM31.23 100.47h2.88v2.88h-2.88zM33.96 100.47h2.88v2.88h-2.88zM42.13 100.47h2.88v2.88h-2.88zM53.04 100.47h2.88v2.88h-2.88zM55.76 100.47h2.88v2.88h-2.88zM66.67 100.47h2.88v2.88h-2.88zM72.12 100.47h2.88v2.88h-2.88zM83.02 100.47h2.88v2.88h-2.88zM88.47 100.47h2.88v2.88h-2.88zM91.20 100.47h2.88v2.88h-2.88zM99.37 100.47h2.88v2.88h-2.88z" fill="#000"/><rect x="6.70" y="7.80" width="19.08" height="19.08" fill="#000"/><rect x="9.43" y="10.53" width="13.63" height="13.63" fill="#fff"/><rect x="12.15" y="13.25" width="8.18" height="8.18" fill="#000"/><rect x="83.02" y="7.80" width="19.08" height="19.08" fill="#000"/><rect x="85.75" y="10.53" width="13.63" height="13.63" fill="#fff"/><rect x="88.47" y="13.25" width="8.18" height="8.18" fill="#000"/><rect x="6.70" y="84.12" width="19.08" height="19.08" fill="#000"/><rect x="9.43" y="86.85" width="13.63" height="13.63" fill="#fff"/><rect x="12.15" y="89.57" width="8.18" height="8.18" fill="#000"/><rect x="42.0" y="42.8" width="24.300" height="24" rx="3.500" fill="#f5a81c" stroke="#fff" stroke-width="1.500"/><text x="54.1" y="58.8" text-anchor="middle" font-family="Liberation Sans,sans-serif" font-weight="bold" font-size="11" fill="#5a3a08" letter-spacing="-0.5">GW</text></svg>
</div></body></html>
